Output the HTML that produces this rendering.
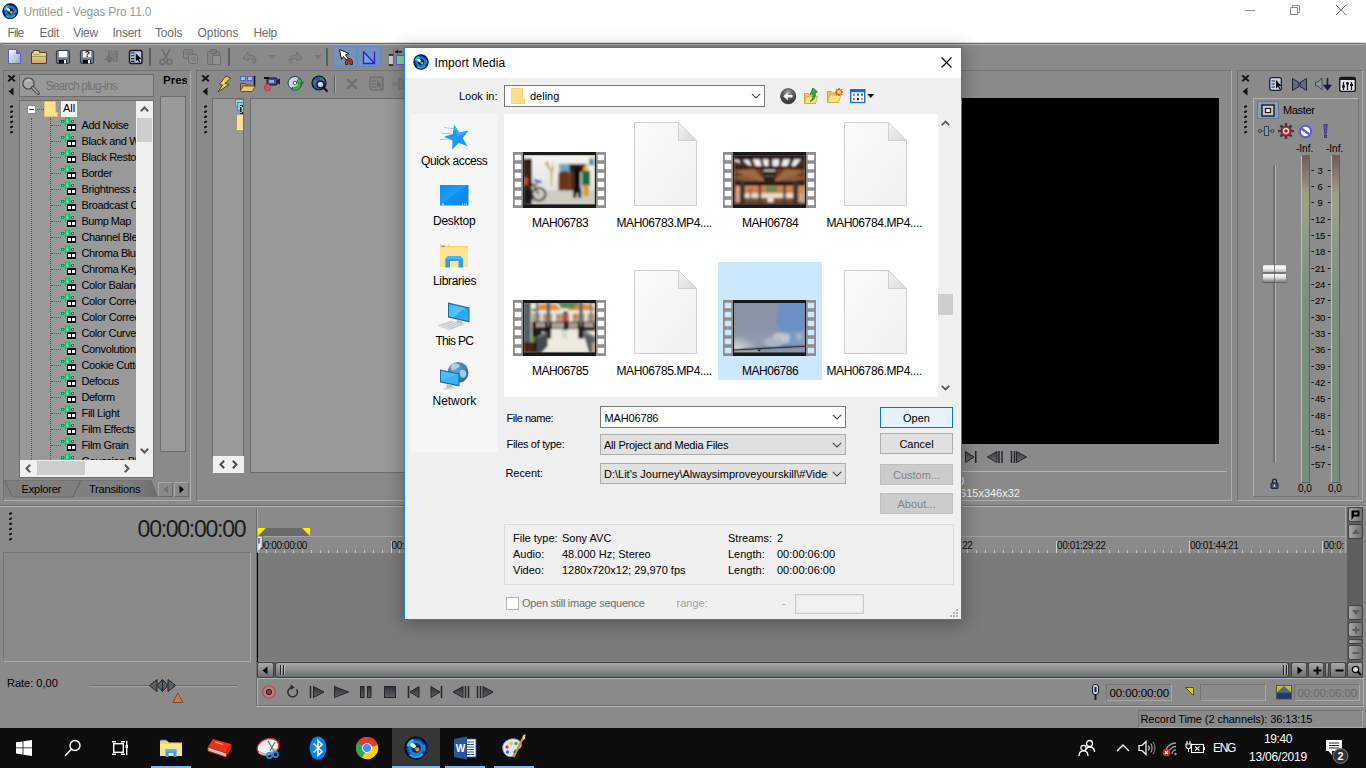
<!DOCTYPE html>
<html><head><meta charset="utf-8"><title>Untitled - Vegas Pro 11.0</title>
<style>
html,body{margin:0;padding:0;}
body{width:1366px;height:768px;overflow:hidden;position:relative;background:#8a8a8a;font-family:"Liberation Sans",sans-serif;font-size:11px;color:#000;}
div,span,svg{position:absolute;box-sizing:border-box;}
span{white-space:nowrap;line-height:1;}
.t{font-size:11px;}
.w{font-size:12px;}
.clip{overflow:hidden;}
</style></head>
<body>
<div style="left:0px;top:0px;width:1366px;height:42px;background:#fff;"></div>
<div style="left:0px;top:42px;width:1366px;height:1px;background:#dcdcdc;"></div>
<div style="left:3px;top:43px;width:1360px;height:1px;background:#6c6c6c;"></div>
<div style="left:3px;top:44px;width:1361px;height:1px;background:#b0b0b0;"></div>
<svg style="left:2px;top:2.7px;" width="16.5" height="16.5" viewBox="0 0 20 20"><defs><radialGradient id="vg2002" cx="0.5" cy="0.5" r="0.5"><stop offset="0" stop-color="#0a1428"/><stop offset="0.36" stop-color="#0c2a50"/><stop offset="0.5" stop-color="#1590e0"/><stop offset="0.72" stop-color="#0a58b8"/><stop offset="0.86" stop-color="#0a1060"/><stop offset="1" stop-color="#04040a"/></radialGradient></defs>
<circle cx="10" cy="10" r="9.6" fill="url(#vg2002)"/><path d="M3.2 8.500A7 7 0 0 1 8 3.300" stroke="#20d8e0" stroke-width="2.200" fill="none" opacity="0.900"/><path d="M5 15.500A7.200 7.200 0 0 0 15.500 14.800" stroke="#18b0ec" stroke-width="2" fill="none" opacity="0.900"/><path d="M16.600 7.500A7 7 0 0 1 16.800 12" stroke="#20a8f0" stroke-width="1.800" fill="none" opacity="0.800"/><ellipse cx="7.600" cy="8" rx="2.600" ry="1.700" fill="#fff" transform="rotate(35 7.600 8)"/><circle cx="11.200" cy="11.300" r="1.700" fill="#f09820"/><circle cx="9.800" cy="10.200" r="1" fill="#8a8a80" opacity="0.800"/></svg>
<span class="t" style="left:23.5px;top:5.5px;font-size:12px;letter-spacing:-0.19px;color:#999;">Untitled - Vegas Pro 11.0</span>
<svg style="left:1244px;top:5px;" width="12" height="12" viewBox="0 0 12 12"><path d="M1 5.5H11" stroke="#8c8c8c" stroke-width="1" fill="none"/></svg>
<svg style="left:1289px;top:4px;" width="12" height="12" viewBox="0 0 12 12"><path d="M1.5 3.5H8.5V10.5H1.5Z M3.5 3.5V1.5H10.5V8.5H8.5" stroke="#8c8c8c" stroke-width="1" fill="none"/></svg>
<svg style="left:1335px;top:4px;" width="12" height="12" viewBox="0 0 12 12"><path d="M1 1L11 11M11 1L1 11" stroke="#737373" stroke-width="1" fill="none"/></svg>
<span class="t" style="left:7.6px;top:27px;font-size:12px;letter-spacing:-0.95px;color:#6d6d6d;">File</span>
<span class="t" style="left:39.5px;top:27px;font-size:12px;letter-spacing:-0.29px;color:#6d6d6d;">Edit</span>
<span class="t" style="left:73.2px;top:27px;font-size:12px;letter-spacing:-0.30px;color:#6d6d6d;">View</span>
<span class="t" style="left:112.4px;top:27px;font-size:12px;letter-spacing:-0.24px;color:#6d6d6d;">Insert</span>
<span class="t" style="left:155px;top:27px;font-size:12px;letter-spacing:-0.15px;color:#6d6d6d;">Tools</span>
<span class="t" style="left:197.6px;top:27px;font-size:12px;letter-spacing:-0.09px;color:#6d6d6d;">Options</span>
<span class="t" style="left:253.4px;top:27px;font-size:12px;letter-spacing:-0.26px;color:#6d6d6d;">Help</span>
<svg style="left:8px;top:49px;" width="13" height="15" viewBox="0 0 13 15"><defs><linearGradient id="nd" x1="0" y1="0" x2="1" y2="1"><stop offset="0" stop-color="#fff"/><stop offset="1" stop-color="#8fa3c6"/></linearGradient></defs><path d="M0.5 0.5H8.500L12.500 4.500V14.500H0.500Z" fill="url(#nd)" stroke="#5a5af0" stroke-width="1"/><path d="M8 0.500L12.500 5H8Z" fill="#5a62e0"/></svg>
<svg style="left:31px;top:50px;" width="16" height="14" viewBox="0 0 16 14"><defs><linearGradient id="fo" x1="0" y1="0" x2="0" y2="1"><stop offset="0" stop-color="#e4e2a0"/><stop offset="0.450" stop-color="#d8cc88"/><stop offset="1" stop-color="#d0a468"/></linearGradient></defs><path d="M0.500 13.500V2.500H2L2.500 0.500H8L8.500 2.500H15.500V13.500Z" fill="url(#fo)" stroke="#5a3a1a"/><path d="M1 6.500H15" stroke="#a08850" stroke-width="0.800"/><path d="M2.500 4.500H8.500" stroke="#a09058" stroke-width="0.800"/></svg>
<svg style="left:55px;top:49px;" width="16" height="16" viewBox="0 0 16 16"><rect x="1.500" y="1.500" width="13" height="13" rx="1.800" fill="#6e7e94" stroke="#38404e" stroke-width="1.200"/><rect x="3.800" y="2" width="8.400" height="6.300" fill="#fafbfd"/><rect x="3.800" y="10.800" width="8" height="3.600" fill="#0c0e14"/><rect x="9" y="11" width="2" height="3.400" fill="#f0f0f0"/></svg>
<svg style="left:79px;top:49px;" width="16" height="16" viewBox="0 0 16 16"><rect x="1.500" y="1.500" width="13" height="13" rx="1.800" fill="#6e7e94" stroke="#38404e" stroke-width="1.200"/><rect x="3.800" y="2" width="8.400" height="6.300" fill="#fafbfd"/><rect x="3.800" y="10.800" width="8" height="3.600" fill="#0c0e14"/><rect x="9" y="11" width="2" height="3.400" fill="#f0f0f0"/><text x="8.300" y="8" font-size="8.500" font-weight="bold" text-anchor="middle" font-family="Liberation Sans,sans-serif" fill="#000">?</text></svg>
<svg style="left:103px;top:49px;" width="16" height="16" viewBox="0 0 16 16"><rect x="5" y="1.500" width="10" height="11.500" fill="#7e7e7e"/><rect x="5" y="1.500" width="2" height="11.500" fill="#727272"/><rect x="13" y="1.500" width="2" height="11.500" fill="#727272"/><path d="M5.500 3.500h1M5.500 6h1M5.500 8.500h1M13.500 3.500h1M13.500 6h1M13.500 8.500h1M13.500 11h1" stroke="#8e8e8e"/><path d="M1 10.500h2l1-3 1 6 1.200-9 1.200 9 1-5 1 2h2" stroke="#707070" fill="none" stroke-width="1.100"/></svg>
<svg style="left:128px;top:49px;" width="15" height="16" viewBox="0 0 15 16"><rect x="1.500" y="1.500" width="12.500" height="13" rx="1.800" fill="#b4c8e6" stroke="#10141c" stroke-width="1.400"/><path d="M3 4h3.500M3 6.800h3.500M3 9.600h3.500M3 12.400h3.500" stroke="#10141c" stroke-width="1.100"/><path d="M7.800 4.500V12.500l1.900-1.700 1.300 2.900 1.400-.7-1.400-2.700 2.500-.2z" fill="#000"/></svg>
<div style="left:149px;top:48px;width:2px;height:18px;background:#5e5e5e;"></div>
<svg style="left:158px;top:48px;" width="16" height="18" viewBox="0 0 16 18"><path d="M4 1L9 11M12 1L7 11" stroke="#6c6c6c" stroke-width="1.6" fill="none"/><circle cx="4.5" cy="14" r="2.5" fill="none" stroke="#6c6c6c" stroke-width="1.4"/><circle cx="11.5" cy="14" r="2.5" fill="none" stroke="#6c6c6c" stroke-width="1.4"/></svg>
<svg style="left:182px;top:48px;" width="17" height="18" viewBox="0 0 17 18"><rect x="1.5" y="1.5" width="9" height="9" rx="2" fill="#868686" stroke="#6e6e6e"/><rect x="6.5" y="6.5" width="9" height="9" rx="2" fill="#8e8e8e" stroke="#6e6e6e"/><path d="M3 4h6M3 6h6M9 10h5M9 12h5" stroke="#747474"/></svg>
<svg style="left:206px;top:48px;" width="17" height="18" viewBox="0 0 17 18"><rect x="1.5" y="3.5" width="12" height="13" rx="1.5" fill="#848484" stroke="#6e6e6e"/><rect x="4.5" y="1.5" width="6" height="4" rx="1" fill="#7a7a7a" stroke="#6a6a6a"/><rect x="6.5" y="7.5" width="8" height="9" fill="#909090" stroke="#707070"/></svg>
<div style="left:228px;top:48px;width:2px;height:18px;background:#5e5e5e;"></div>
<svg style="left:241px;top:50px;" width="18" height="14" viewBox="0 0 18 14"><path d="M2 8L7 2V5C12 5 15 7 15 11C13 9 10 8.5 7 9V11Z" fill="#848484" stroke="#707070"/><circle cx="13" cy="11.5" r="1.6" fill="none" stroke="#707070"/></svg>
<svg style="left:268px;top:55px;" width="8" height="5" viewBox="0 0 8 5"><path d="M0 0H8L4 4.5Z" fill="#787878"/></svg>
<svg style="left:286px;top:50px;" width="18" height="14" viewBox="0 0 18 14"><path d="M16 8L11 2V5C6 5 3 7 3 11C5 9 8 8.5 11 9V11Z" fill="#848484" stroke="#707070"/><circle cx="5" cy="11.5" r="1.6" fill="none" stroke="#707070"/></svg>
<svg style="left:314px;top:55px;" width="8" height="5" viewBox="0 0 8 5"><path d="M0 0H8L4 4.5Z" fill="#787878"/></svg>
<div style="left:326px;top:48px;width:2px;height:18px;background:#5e5e5e;"></div>
<div style="left:333px;top:46px;width:24px;height:21px;background:#7592b6;border:1px solid #5f8cc8;"></div>
<div style="left:357px;top:46px;width:24px;height:21px;background:#7592b6;border:1px solid #5f8cc8;"></div>
<svg style="left:337px;top:48px;" width="17" height="18" viewBox="0 0 17 18"><path d="M2.500 1.500L12 5.500L8.500 7L11.500 11L9.500 12.500L6.500 8.500L4.500 11.500Z" fill="#fff" stroke="#111" stroke-width="1"/><path d="M8.500 16.500V14a3.500 3.500 0 0 1 7 0V16.500H13V14a1 1 0 0 0 -2 0V16.500Z" fill="#d83020" stroke="#3a0a0a" stroke-width="0.800"/></svg>
<svg style="left:361px;top:49px;" width="16" height="16" viewBox="0 0 16 16"><path d="M2.500 2.500L13.500 14.500H2.500Z" fill="#8a9cf0" opacity="0.800"/><path d="M2.500 2.500V14.500H13.500V2.500M2.500 2.500L13.500 14.500" fill="none" stroke="#1428d8" stroke-width="1.300"/></svg>
<svg style="left:388px;top:48px;" width="18" height="18" viewBox="0 0 18 18"><rect x="1" y="7" width="4" height="10" fill="#c4ccd8"/><path d="M0.800 7H5.200M0.800 17H5.200" stroke="#111" stroke-width="1.300"/><path d="M5.500 1V17" stroke="#5a5af0" stroke-width="1"/><path d="M6.500 3.700L10 1.500V3H14V4.400H10V5.900Z" fill="#141430"/><rect x="8.500" y="7.500" width="9" height="9" fill="#86d890" stroke="#5a5af0" stroke-width="1"/></svg>
<div style="left:3px;top:70px;width:188px;height:431px;border:1px solid #737373;border-right-color:#adadad;border-bottom-color:#adadad;background:#8a8a8a;"></div>
<svg style="left:7px;top:75px;" width="9" height="8" viewBox="0 0 9 8"><path d="M1.200 0.300L7.800 6.200M7.800 0.300L1.200 6.200" stroke="#141418" stroke-width="1.900" fill="none"/></svg>
<svg style="left:8px;top:87px;" width="6" height="9" viewBox="0 0 6 9"><path d="M5.5 0.5V8.5L0.5 4.5Z" fill="#111"/></svg>
<svg style="left:8.5px;top:105px;" width="6" height="31.72" viewBox="0 0 6 31.72"><ellipse cx="3.200" cy="2.30" rx="1.500" ry="1" fill="#a8b4c4" opacity="0.550" transform="rotate(-25 3.200 2.30)"/><ellipse cx="2.600" cy="1.60" rx="1.700" ry="1.150" fill="#14161a" transform="rotate(-25 2.600 1.60)"/><ellipse cx="3.200" cy="7.42" rx="1.500" ry="1" fill="#a8b4c4" opacity="0.550" transform="rotate(-25 3.200 7.42)"/><ellipse cx="2.600" cy="6.72" rx="1.700" ry="1.150" fill="#14161a" transform="rotate(-25 2.600 6.72)"/><ellipse cx="3.200" cy="12.54" rx="1.500" ry="1" fill="#a8b4c4" opacity="0.550" transform="rotate(-25 3.200 12.54)"/><ellipse cx="2.600" cy="11.84" rx="1.700" ry="1.150" fill="#14161a" transform="rotate(-25 2.600 11.84)"/><ellipse cx="3.200" cy="17.66" rx="1.500" ry="1" fill="#a8b4c4" opacity="0.550" transform="rotate(-25 3.200 17.66)"/><ellipse cx="2.600" cy="16.96" rx="1.700" ry="1.150" fill="#14161a" transform="rotate(-25 2.600 16.96)"/><ellipse cx="3.200" cy="22.78" rx="1.500" ry="1" fill="#a8b4c4" opacity="0.550" transform="rotate(-25 3.200 22.78)"/><ellipse cx="2.600" cy="22.08" rx="1.700" ry="1.150" fill="#14161a" transform="rotate(-25 2.600 22.08)"/><ellipse cx="3.200" cy="27.90" rx="1.500" ry="1" fill="#a8b4c4" opacity="0.550" transform="rotate(-25 3.200 27.90)"/><ellipse cx="2.600" cy="27.20" rx="1.700" ry="1.150" fill="#14161a" transform="rotate(-25 2.600 27.20)"/></svg>
<div style="left:19px;top:74px;width:135px;height:23px;background:#999;border:1px solid #6e6e6e;"></div>
<svg style="left:20.5px;top:76px;" width="20" height="20" viewBox="0 0 20 20"><circle cx="7.5" cy="7.5" r="5.6" fill="#a8a8a8" stroke="#4a4a4a" stroke-width="1.3"/><path d="M4.5 6.5a3.4 3.4 0 0 1 5-2" stroke="#d8d8d8" fill="none"/><path d="M11.5 11.5L17.2 17.2" stroke="#4a4a4a" stroke-width="3.4" stroke-linecap="round"/><path d="M11.8 11.8L17 17" stroke="#b4b4b4" stroke-width="1.4" stroke-linecap="round"/></svg>
<span class="t" style="left:45.5px;top:80px;font-size:12px;letter-spacing:-0.79px;color:#727272;">Search plug-ins</span>
<div style="left:160px;top:74px;width:27px;height:14px;overflow:hidden;"><span class="t" style="left:3px;top:1px;font-weight:bold;font-size:11.5px;">Preset:</span></div>
<div style="left:160px;top:96px;width:26px;height:356px;background:#999;border:1px solid #6c6c6c;"></div>
<div style="left:19px;top:100px;width:135px;height:378px;background:#999;border:1px solid #6e6e6e;overflow:hidden;"><div style="left:0px;top:0px;width:116px;height:359px;overflow:hidden;"><div style="left:11px;top:17px;width:1px;height:380px;border-left:1px dotted #555;"></div>
<div style="left:30px;top:17px;width:1px;height:380px;border-left:1px dotted #555;"></div>
<div style="left:17px;top:8px;width:7px;height:1px;border-top:1px dotted #555;"></div>
<div style="left:7px;top:4px;width:9px;height:9px;background:#fff;border:1px solid #8a8a8a;"><div style="left:1px;top:3px;width:5px;height:1px;background:#2040c0;"></div></div>
<svg style="left:24px;top:0px;" width="14" height="16" viewBox="0 0 14 16"><path d="M0.5 0.5H11.5V11.5H13.5V15.5H0.5Z" fill="#ffe28a" stroke="#e8c860" stroke-width="0.6"/></svg>
<div style="left:41px;top:0px;width:16px;height:16px;background:#f2f2f2;"></div>
<span class="t" style="left:43px;top:2px;font-size:11px;">All</span>
<div style="left:31px;top:24px;width:10px;height:1px;border-top:1px dotted #555;"></div>
<svg style="left:41px;top:17px;" width="15" height="13" viewBox="0 0 15 13"><rect x="0" y="2" width="3" height="3" fill="#009a58"/><rect x="1" y="3" width="1" height="1" fill="#60ffb0"/><rect x="10" y="2" width="3" height="3" fill="#009a58"/><rect x="11" y="3" width="1" height="1" fill="#60ffb0"/><rect x="3" y="3" width="7" height="1" fill="#00a060"/><rect x="4" y="0" width="5" height="7" fill="#00c070"/><rect x="5" y="1" width="2.500" height="4.500" fill="#30f098"/><rect x="6" y="6" width="9" height="7" fill="#000"/><rect x="7" y="8" width="3" height="3" fill="#fff"/><rect x="11" y="8" width="3" height="3" fill="#fff"/></svg>
<span class="t" style="left:61.5px;top:19px;font-size:11px;letter-spacing:-0.41px;">Add Noise</span>
<div style="left:31px;top:40px;width:10px;height:1px;border-top:1px dotted #555;"></div>
<svg style="left:41px;top:33px;" width="15" height="13" viewBox="0 0 15 13"><rect x="0" y="2" width="3" height="3" fill="#009a58"/><rect x="1" y="3" width="1" height="1" fill="#60ffb0"/><rect x="10" y="2" width="3" height="3" fill="#009a58"/><rect x="11" y="3" width="1" height="1" fill="#60ffb0"/><rect x="3" y="3" width="7" height="1" fill="#00a060"/><rect x="4" y="0" width="5" height="7" fill="#00c070"/><rect x="5" y="1" width="2.500" height="4.500" fill="#30f098"/><rect x="6" y="6" width="9" height="7" fill="#000"/><rect x="7" y="8" width="3" height="3" fill="#fff"/><rect x="11" y="8" width="3" height="3" fill="#fff"/></svg>
<span class="t" style="left:61.5px;top:35px;font-size:11px;letter-spacing:-0.37px;">Black and White</span>
<div style="left:31px;top:56px;width:10px;height:1px;border-top:1px dotted #555;"></div>
<svg style="left:41px;top:49px;" width="15" height="13" viewBox="0 0 15 13"><rect x="0" y="2" width="3" height="3" fill="#009a58"/><rect x="1" y="3" width="1" height="1" fill="#60ffb0"/><rect x="10" y="2" width="3" height="3" fill="#009a58"/><rect x="11" y="3" width="1" height="1" fill="#60ffb0"/><rect x="3" y="3" width="7" height="1" fill="#00a060"/><rect x="4" y="0" width="5" height="7" fill="#00c070"/><rect x="5" y="1" width="2.500" height="4.500" fill="#30f098"/><rect x="6" y="6" width="9" height="7" fill="#000"/><rect x="7" y="8" width="3" height="3" fill="#fff"/><rect x="11" y="8" width="3" height="3" fill="#fff"/></svg>
<span class="t" style="left:61.5px;top:51px;font-size:11px;letter-spacing:-0.37px;">Black Restore</span>
<div style="left:31px;top:72px;width:10px;height:1px;border-top:1px dotted #555;"></div>
<svg style="left:41px;top:65px;" width="15" height="13" viewBox="0 0 15 13"><rect x="0" y="2" width="3" height="3" fill="#009a58"/><rect x="1" y="3" width="1" height="1" fill="#60ffb0"/><rect x="10" y="2" width="3" height="3" fill="#009a58"/><rect x="11" y="3" width="1" height="1" fill="#60ffb0"/><rect x="3" y="3" width="7" height="1" fill="#00a060"/><rect x="4" y="0" width="5" height="7" fill="#00c070"/><rect x="5" y="1" width="2.500" height="4.500" fill="#30f098"/><rect x="6" y="6" width="9" height="7" fill="#000"/><rect x="7" y="8" width="3" height="3" fill="#fff"/><rect x="11" y="8" width="3" height="3" fill="#fff"/></svg>
<span class="t" style="left:61.5px;top:67px;font-size:11px;letter-spacing:-0.43px;">Border</span>
<div style="left:31px;top:88px;width:10px;height:1px;border-top:1px dotted #555;"></div>
<svg style="left:41px;top:81px;" width="15" height="13" viewBox="0 0 15 13"><rect x="0" y="2" width="3" height="3" fill="#009a58"/><rect x="1" y="3" width="1" height="1" fill="#60ffb0"/><rect x="10" y="2" width="3" height="3" fill="#009a58"/><rect x="11" y="3" width="1" height="1" fill="#60ffb0"/><rect x="3" y="3" width="7" height="1" fill="#00a060"/><rect x="4" y="0" width="5" height="7" fill="#00c070"/><rect x="5" y="1" width="2.500" height="4.500" fill="#30f098"/><rect x="6" y="6" width="9" height="7" fill="#000"/><rect x="7" y="8" width="3" height="3" fill="#fff"/><rect x="11" y="8" width="3" height="3" fill="#fff"/></svg>
<span class="t" style="left:61.5px;top:83px;font-size:11px;letter-spacing:-0.35px;">Brightness and Contrast</span>
<div style="left:31px;top:104px;width:10px;height:1px;border-top:1px dotted #555;"></div>
<svg style="left:41px;top:97px;" width="15" height="13" viewBox="0 0 15 13"><rect x="0" y="2" width="3" height="3" fill="#009a58"/><rect x="1" y="3" width="1" height="1" fill="#60ffb0"/><rect x="10" y="2" width="3" height="3" fill="#009a58"/><rect x="11" y="3" width="1" height="1" fill="#60ffb0"/><rect x="3" y="3" width="7" height="1" fill="#00a060"/><rect x="4" y="0" width="5" height="7" fill="#00c070"/><rect x="5" y="1" width="2.500" height="4.500" fill="#30f098"/><rect x="6" y="6" width="9" height="7" fill="#000"/><rect x="7" y="8" width="3" height="3" fill="#fff"/><rect x="11" y="8" width="3" height="3" fill="#fff"/></svg>
<span class="t" style="left:61.5px;top:99px;font-size:11px;letter-spacing:-0.37px;">Broadcast Colors</span>
<div style="left:31px;top:120px;width:10px;height:1px;border-top:1px dotted #555;"></div>
<svg style="left:41px;top:113px;" width="15" height="13" viewBox="0 0 15 13"><rect x="0" y="2" width="3" height="3" fill="#009a58"/><rect x="1" y="3" width="1" height="1" fill="#60ffb0"/><rect x="10" y="2" width="3" height="3" fill="#009a58"/><rect x="11" y="3" width="1" height="1" fill="#60ffb0"/><rect x="3" y="3" width="7" height="1" fill="#00a060"/><rect x="4" y="0" width="5" height="7" fill="#00c070"/><rect x="5" y="1" width="2.500" height="4.500" fill="#30f098"/><rect x="6" y="6" width="9" height="7" fill="#000"/><rect x="7" y="8" width="3" height="3" fill="#fff"/><rect x="11" y="8" width="3" height="3" fill="#fff"/></svg>
<span class="t" style="left:61.5px;top:115px;font-size:11px;letter-spacing:-0.49px;">Bump Map</span>
<div style="left:31px;top:136px;width:10px;height:1px;border-top:1px dotted #555;"></div>
<svg style="left:41px;top:129px;" width="15" height="13" viewBox="0 0 15 13"><rect x="0" y="2" width="3" height="3" fill="#009a58"/><rect x="1" y="3" width="1" height="1" fill="#60ffb0"/><rect x="10" y="2" width="3" height="3" fill="#009a58"/><rect x="11" y="3" width="1" height="1" fill="#60ffb0"/><rect x="3" y="3" width="7" height="1" fill="#00a060"/><rect x="4" y="0" width="5" height="7" fill="#00c070"/><rect x="5" y="1" width="2.500" height="4.500" fill="#30f098"/><rect x="6" y="6" width="9" height="7" fill="#000"/><rect x="7" y="8" width="3" height="3" fill="#fff"/><rect x="11" y="8" width="3" height="3" fill="#fff"/></svg>
<span class="t" style="left:61.5px;top:131px;font-size:11px;letter-spacing:-0.39px;">Channel Blend</span>
<div style="left:31px;top:152px;width:10px;height:1px;border-top:1px dotted #555;"></div>
<svg style="left:41px;top:145px;" width="15" height="13" viewBox="0 0 15 13"><rect x="0" y="2" width="3" height="3" fill="#009a58"/><rect x="1" y="3" width="1" height="1" fill="#60ffb0"/><rect x="10" y="2" width="3" height="3" fill="#009a58"/><rect x="11" y="3" width="1" height="1" fill="#60ffb0"/><rect x="3" y="3" width="7" height="1" fill="#00a060"/><rect x="4" y="0" width="5" height="7" fill="#00c070"/><rect x="5" y="1" width="2.500" height="4.500" fill="#30f098"/><rect x="6" y="6" width="9" height="7" fill="#000"/><rect x="7" y="8" width="3" height="3" fill="#fff"/><rect x="11" y="8" width="3" height="3" fill="#fff"/></svg>
<span class="t" style="left:61.5px;top:147px;font-size:11px;letter-spacing:-0.40px;">Chroma Blur</span>
<div style="left:31px;top:168px;width:10px;height:1px;border-top:1px dotted #555;"></div>
<svg style="left:41px;top:161px;" width="15" height="13" viewBox="0 0 15 13"><rect x="0" y="2" width="3" height="3" fill="#009a58"/><rect x="1" y="3" width="1" height="1" fill="#60ffb0"/><rect x="10" y="2" width="3" height="3" fill="#009a58"/><rect x="11" y="3" width="1" height="1" fill="#60ffb0"/><rect x="3" y="3" width="7" height="1" fill="#00a060"/><rect x="4" y="0" width="5" height="7" fill="#00c070"/><rect x="5" y="1" width="2.500" height="4.500" fill="#30f098"/><rect x="6" y="6" width="9" height="7" fill="#000"/><rect x="7" y="8" width="3" height="3" fill="#fff"/><rect x="11" y="8" width="3" height="3" fill="#fff"/></svg>
<span class="t" style="left:61.5px;top:163px;font-size:11px;letter-spacing:-0.42px;">Chroma Keyer</span>
<div style="left:31px;top:184px;width:10px;height:1px;border-top:1px dotted #555;"></div>
<svg style="left:41px;top:177px;" width="15" height="13" viewBox="0 0 15 13"><rect x="0" y="2" width="3" height="3" fill="#009a58"/><rect x="1" y="3" width="1" height="1" fill="#60ffb0"/><rect x="10" y="2" width="3" height="3" fill="#009a58"/><rect x="11" y="3" width="1" height="1" fill="#60ffb0"/><rect x="3" y="3" width="7" height="1" fill="#00a060"/><rect x="4" y="0" width="5" height="7" fill="#00c070"/><rect x="5" y="1" width="2.500" height="4.500" fill="#30f098"/><rect x="6" y="6" width="9" height="7" fill="#000"/><rect x="7" y="8" width="3" height="3" fill="#fff"/><rect x="11" y="8" width="3" height="3" fill="#fff"/></svg>
<span class="t" style="left:61.5px;top:179px;font-size:11px;letter-spacing:-0.37px;">Color Balance</span>
<div style="left:31px;top:200px;width:10px;height:1px;border-top:1px dotted #555;"></div>
<svg style="left:41px;top:193px;" width="15" height="13" viewBox="0 0 15 13"><rect x="0" y="2" width="3" height="3" fill="#009a58"/><rect x="1" y="3" width="1" height="1" fill="#60ffb0"/><rect x="10" y="2" width="3" height="3" fill="#009a58"/><rect x="11" y="3" width="1" height="1" fill="#60ffb0"/><rect x="3" y="3" width="7" height="1" fill="#00a060"/><rect x="4" y="0" width="5" height="7" fill="#00c070"/><rect x="5" y="1" width="2.500" height="4.500" fill="#30f098"/><rect x="6" y="6" width="9" height="7" fill="#000"/><rect x="7" y="8" width="3" height="3" fill="#fff"/><rect x="11" y="8" width="3" height="3" fill="#fff"/></svg>
<span class="t" style="left:61.5px;top:195px;font-size:11px;letter-spacing:-0.35px;">Color Corrector</span>
<div style="left:31px;top:216px;width:10px;height:1px;border-top:1px dotted #555;"></div>
<svg style="left:41px;top:209px;" width="15" height="13" viewBox="0 0 15 13"><rect x="0" y="2" width="3" height="3" fill="#009a58"/><rect x="1" y="3" width="1" height="1" fill="#60ffb0"/><rect x="10" y="2" width="3" height="3" fill="#009a58"/><rect x="11" y="3" width="1" height="1" fill="#60ffb0"/><rect x="3" y="3" width="7" height="1" fill="#00a060"/><rect x="4" y="0" width="5" height="7" fill="#00c070"/><rect x="5" y="1" width="2.500" height="4.500" fill="#30f098"/><rect x="6" y="6" width="9" height="7" fill="#000"/><rect x="7" y="8" width="3" height="3" fill="#fff"/><rect x="11" y="8" width="3" height="3" fill="#fff"/></svg>
<span class="t" style="left:61.5px;top:211px;font-size:11px;letter-spacing:-0.35px;">Color Corrector (Secondary)</span>
<div style="left:31px;top:232px;width:10px;height:1px;border-top:1px dotted #555;"></div>
<svg style="left:41px;top:225px;" width="15" height="13" viewBox="0 0 15 13"><rect x="0" y="2" width="3" height="3" fill="#009a58"/><rect x="1" y="3" width="1" height="1" fill="#60ffb0"/><rect x="10" y="2" width="3" height="3" fill="#009a58"/><rect x="11" y="3" width="1" height="1" fill="#60ffb0"/><rect x="3" y="3" width="7" height="1" fill="#00a060"/><rect x="4" y="0" width="5" height="7" fill="#00c070"/><rect x="5" y="1" width="2.500" height="4.500" fill="#30f098"/><rect x="6" y="6" width="9" height="7" fill="#000"/><rect x="7" y="8" width="3" height="3" fill="#fff"/><rect x="11" y="8" width="3" height="3" fill="#fff"/></svg>
<span class="t" style="left:61.5px;top:227px;font-size:11px;letter-spacing:-0.38px;">Color Curves</span>
<div style="left:31px;top:248px;width:10px;height:1px;border-top:1px dotted #555;"></div>
<svg style="left:41px;top:241px;" width="15" height="13" viewBox="0 0 15 13"><rect x="0" y="2" width="3" height="3" fill="#009a58"/><rect x="1" y="3" width="1" height="1" fill="#60ffb0"/><rect x="10" y="2" width="3" height="3" fill="#009a58"/><rect x="11" y="3" width="1" height="1" fill="#60ffb0"/><rect x="3" y="3" width="7" height="1" fill="#00a060"/><rect x="4" y="0" width="5" height="7" fill="#00c070"/><rect x="5" y="1" width="2.500" height="4.500" fill="#30f098"/><rect x="6" y="6" width="9" height="7" fill="#000"/><rect x="7" y="8" width="3" height="3" fill="#fff"/><rect x="11" y="8" width="3" height="3" fill="#fff"/></svg>
<span class="t" style="left:61.5px;top:243px;font-size:11px;letter-spacing:-0.36px;">Convolution Kernel</span>
<div style="left:31px;top:264px;width:10px;height:1px;border-top:1px dotted #555;"></div>
<svg style="left:41px;top:257px;" width="15" height="13" viewBox="0 0 15 13"><rect x="0" y="2" width="3" height="3" fill="#009a58"/><rect x="1" y="3" width="1" height="1" fill="#60ffb0"/><rect x="10" y="2" width="3" height="3" fill="#009a58"/><rect x="11" y="3" width="1" height="1" fill="#60ffb0"/><rect x="3" y="3" width="7" height="1" fill="#00a060"/><rect x="4" y="0" width="5" height="7" fill="#00c070"/><rect x="5" y="1" width="2.500" height="4.500" fill="#30f098"/><rect x="6" y="6" width="9" height="7" fill="#000"/><rect x="7" y="8" width="3" height="3" fill="#fff"/><rect x="11" y="8" width="3" height="3" fill="#fff"/></svg>
<span class="t" style="left:61.5px;top:259px;font-size:11px;letter-spacing:-0.36px;">Cookie Cutter</span>
<div style="left:31px;top:280px;width:10px;height:1px;border-top:1px dotted #555;"></div>
<svg style="left:41px;top:273px;" width="15" height="13" viewBox="0 0 15 13"><rect x="0" y="2" width="3" height="3" fill="#009a58"/><rect x="1" y="3" width="1" height="1" fill="#60ffb0"/><rect x="10" y="2" width="3" height="3" fill="#009a58"/><rect x="11" y="3" width="1" height="1" fill="#60ffb0"/><rect x="3" y="3" width="7" height="1" fill="#00a060"/><rect x="4" y="0" width="5" height="7" fill="#00c070"/><rect x="5" y="1" width="2.500" height="4.500" fill="#30f098"/><rect x="6" y="6" width="9" height="7" fill="#000"/><rect x="7" y="8" width="3" height="3" fill="#fff"/><rect x="11" y="8" width="3" height="3" fill="#fff"/></svg>
<span class="t" style="left:61.5px;top:275px;font-size:11px;letter-spacing:-0.44px;">Defocus</span>
<div style="left:31px;top:296px;width:10px;height:1px;border-top:1px dotted #555;"></div>
<svg style="left:41px;top:289px;" width="15" height="13" viewBox="0 0 15 13"><rect x="0" y="2" width="3" height="3" fill="#009a58"/><rect x="1" y="3" width="1" height="1" fill="#60ffb0"/><rect x="10" y="2" width="3" height="3" fill="#009a58"/><rect x="11" y="3" width="1" height="1" fill="#60ffb0"/><rect x="3" y="3" width="7" height="1" fill="#00a060"/><rect x="4" y="0" width="5" height="7" fill="#00c070"/><rect x="5" y="1" width="2.500" height="4.500" fill="#30f098"/><rect x="6" y="6" width="9" height="7" fill="#000"/><rect x="7" y="8" width="3" height="3" fill="#fff"/><rect x="11" y="8" width="3" height="3" fill="#fff"/></svg>
<span class="t" style="left:61.5px;top:291px;font-size:11px;letter-spacing:-0.47px;">Deform</span>
<div style="left:31px;top:312px;width:10px;height:1px;border-top:1px dotted #555;"></div>
<svg style="left:41px;top:305px;" width="15" height="13" viewBox="0 0 15 13"><rect x="0" y="2" width="3" height="3" fill="#009a58"/><rect x="1" y="3" width="1" height="1" fill="#60ffb0"/><rect x="10" y="2" width="3" height="3" fill="#009a58"/><rect x="11" y="3" width="1" height="1" fill="#60ffb0"/><rect x="3" y="3" width="7" height="1" fill="#00a060"/><rect x="4" y="0" width="5" height="7" fill="#00c070"/><rect x="5" y="1" width="2.500" height="4.500" fill="#30f098"/><rect x="6" y="6" width="9" height="7" fill="#000"/><rect x="7" y="8" width="3" height="3" fill="#fff"/><rect x="11" y="8" width="3" height="3" fill="#fff"/></svg>
<span class="t" style="left:61.5px;top:307px;font-size:11px;letter-spacing:-0.30px;">Fill Light</span>
<div style="left:31px;top:328px;width:10px;height:1px;border-top:1px dotted #555;"></div>
<svg style="left:41px;top:321px;" width="15" height="13" viewBox="0 0 15 13"><rect x="0" y="2" width="3" height="3" fill="#009a58"/><rect x="1" y="3" width="1" height="1" fill="#60ffb0"/><rect x="10" y="2" width="3" height="3" fill="#009a58"/><rect x="11" y="3" width="1" height="1" fill="#60ffb0"/><rect x="3" y="3" width="7" height="1" fill="#00a060"/><rect x="4" y="0" width="5" height="7" fill="#00c070"/><rect x="5" y="1" width="2.500" height="4.500" fill="#30f098"/><rect x="6" y="6" width="9" height="7" fill="#000"/><rect x="7" y="8" width="3" height="3" fill="#fff"/><rect x="11" y="8" width="3" height="3" fill="#fff"/></svg>
<span class="t" style="left:61.5px;top:323px;font-size:11px;letter-spacing:-0.34px;">Film Effects</span>
<div style="left:31px;top:344px;width:10px;height:1px;border-top:1px dotted #555;"></div>
<svg style="left:41px;top:337px;" width="15" height="13" viewBox="0 0 15 13"><rect x="0" y="2" width="3" height="3" fill="#009a58"/><rect x="1" y="3" width="1" height="1" fill="#60ffb0"/><rect x="10" y="2" width="3" height="3" fill="#009a58"/><rect x="11" y="3" width="1" height="1" fill="#60ffb0"/><rect x="3" y="3" width="7" height="1" fill="#00a060"/><rect x="4" y="0" width="5" height="7" fill="#00c070"/><rect x="5" y="1" width="2.500" height="4.500" fill="#30f098"/><rect x="6" y="6" width="9" height="7" fill="#000"/><rect x="7" y="8" width="3" height="3" fill="#fff"/><rect x="11" y="8" width="3" height="3" fill="#fff"/></svg>
<span class="t" style="left:61.5px;top:339px;font-size:11px;letter-spacing:-0.37px;">Film Grain</span>
<div style="left:31px;top:360px;width:10px;height:1px;border-top:1px dotted #555;"></div>
<svg style="left:41px;top:353px;" width="15" height="13" viewBox="0 0 15 13"><rect x="0" y="2" width="3" height="3" fill="#009a58"/><rect x="1" y="3" width="1" height="1" fill="#60ffb0"/><rect x="10" y="2" width="3" height="3" fill="#009a58"/><rect x="11" y="3" width="1" height="1" fill="#60ffb0"/><rect x="3" y="3" width="7" height="1" fill="#00a060"/><rect x="4" y="0" width="5" height="7" fill="#00c070"/><rect x="5" y="1" width="2.500" height="4.500" fill="#30f098"/><rect x="6" y="6" width="9" height="7" fill="#000"/><rect x="7" y="8" width="3" height="3" fill="#fff"/><rect x="11" y="8" width="3" height="3" fill="#fff"/></svg>
<span class="t" style="left:61.5px;top:355px;font-size:11px;letter-spacing:-0.37px;">Gaussian Blur</span>
</div>
</div>
<div style="left:136px;top:101px;width:17px;height:376px;background:#f0f0f0;"></div>
<svg style="left:140px;top:106px;" width="9" height="6" viewBox="0 0 9 6"><path d="M0.8 5.2L4.5 1.5L8.2 5.2" stroke="#5a5a5a" stroke-width="2" fill="none"/></svg>
<svg style="left:140px;top:448px;" width="9" height="6" viewBox="0 0 9 6"><path d="M0.8 0.8L4.5 4.5L8.2 0.8" stroke="#5a5a5a" stroke-width="2" fill="none"/></svg>
<div style="left:137px;top:118px;width:15px;height:24px;background:#cdcdcd;"></div>
<div style="left:20px;top:460px;width:133px;height:17px;background:#f0f0f0;"></div>
<svg style="left:25px;top:464px;" width="6" height="9" viewBox="0 0 6 9"><path d="M5.2 0.8L1.5 4.5L5.2 8.2" stroke="#5a5a5a" stroke-width="2" fill="none"/></svg>
<svg style="left:124px;top:464px;" width="6" height="9" viewBox="0 0 6 9"><path d="M0.8 0.8L4.5 4.5L0.8 8.2" stroke="#5a5a5a" stroke-width="2" fill="none"/></svg>
<div style="left:37px;top:461px;width:48px;height:14px;background:#cdcdcd;"></div>
<svg style="left:4px;top:480px;" width="187" height="20" viewBox="0 0 187 20"><defs><linearGradient id="tbg" x1="0" y1="0" x2="1" y2="0"><stop offset="0" stop-color="#7e7e7e"/><stop offset="0.800" stop-color="#808080"/><stop offset="1" stop-color="#6c6c6c"/></linearGradient></defs><path d="M0 0.500H147L153.500 17H0Z" fill="url(#tbg)"/><path d="M0 0.500H147" stroke="#747474" fill="none"/><path d="M0.500 0.500L8.500 17H69L76.500 0.500M69 17L76.500 0.500M147 0.500L153.500 17" fill="none" stroke="#6a6a6a" stroke-width="1"/></svg>
<span class="t" style="left:21.5px;top:484px;font-size:11px;letter-spacing:-0.17px;">Explorer</span>
<span class="t" style="left:89px;top:484px;font-size:11px;letter-spacing:-0.20px;">Transitions</span>
<div style="left:158px;top:482px;width:15px;height:15px;background:#8a8a8a;border:1px solid #a8a8a8;border-right-color:#6a6a6a;border-bottom-color:#6a6a6a;"><svg style="left:4px;top:2px" width="6" height="9"><path d="M5 0.5V8.5L0.5 4.5Z" fill="#707070"/></svg></div>
<div style="left:174px;top:482px;width:15px;height:15px;background:#8a8a8a;border:1px solid #a8a8a8;border-right-color:#6a6a6a;border-bottom-color:#6a6a6a;"><svg style="left:4px;top:2px" width="6" height="9"><path d="M0.5 0.5V8.5L5 4.5Z" fill="#000"/></svg></div>
<div style="left:196px;top:70px;width:837px;height:431px;border:1px solid #737373;border-right-color:#adadad;border-bottom-color:#adadad;background:#8a8a8a;"></div>
<svg style="left:201px;top:75px;" width="9" height="8" viewBox="0 0 9 8"><path d="M1.200 0.300L7.800 6.200M7.800 0.300L1.200 6.200" stroke="#141418" stroke-width="1.900" fill="none"/></svg>
<svg style="left:202px;top:87px;" width="6" height="9" viewBox="0 0 6 9"><path d="M5.5 0.5V8.5L0.5 4.5Z" fill="#111"/></svg>
<svg style="left:202.5px;top:105px;" width="6" height="31.72" viewBox="0 0 6 31.72"><ellipse cx="3.200" cy="2.30" rx="1.500" ry="1" fill="#a8b4c4" opacity="0.550" transform="rotate(-25 3.200 2.30)"/><ellipse cx="2.600" cy="1.60" rx="1.700" ry="1.150" fill="#14161a" transform="rotate(-25 2.600 1.60)"/><ellipse cx="3.200" cy="7.42" rx="1.500" ry="1" fill="#a8b4c4" opacity="0.550" transform="rotate(-25 3.200 7.42)"/><ellipse cx="2.600" cy="6.72" rx="1.700" ry="1.150" fill="#14161a" transform="rotate(-25 2.600 6.72)"/><ellipse cx="3.200" cy="12.54" rx="1.500" ry="1" fill="#a8b4c4" opacity="0.550" transform="rotate(-25 3.200 12.54)"/><ellipse cx="2.600" cy="11.84" rx="1.700" ry="1.150" fill="#14161a" transform="rotate(-25 2.600 11.84)"/><ellipse cx="3.200" cy="17.66" rx="1.500" ry="1" fill="#a8b4c4" opacity="0.550" transform="rotate(-25 3.200 17.66)"/><ellipse cx="2.600" cy="16.96" rx="1.700" ry="1.150" fill="#14161a" transform="rotate(-25 2.600 16.96)"/><ellipse cx="3.200" cy="22.78" rx="1.500" ry="1" fill="#a8b4c4" opacity="0.550" transform="rotate(-25 3.200 22.78)"/><ellipse cx="2.600" cy="22.08" rx="1.700" ry="1.150" fill="#14161a" transform="rotate(-25 2.600 22.08)"/><ellipse cx="3.200" cy="27.90" rx="1.500" ry="1" fill="#a8b4c4" opacity="0.550" transform="rotate(-25 3.200 27.90)"/><ellipse cx="2.600" cy="27.20" rx="1.700" ry="1.150" fill="#14161a" transform="rotate(-25 2.600 27.20)"/></svg>
<svg style="left:216px;top:75px;" width="17" height="18" viewBox="0 0 17 18"><path d="M10 1L14.5 3L9 8.5L13 9.5L2 17L6.5 10L3.5 9Z" fill="#e8d060" stroke="#403810" stroke-width="0.9"/></svg>
<svg style="left:239px;top:75px;" width="18" height="18" viewBox="0 0 18 18"><rect x="1.5" y="1.5" width="5" height="4" fill="#80e0a0" stroke="#5060e0"/><rect x="8.500" y="1.5" width="5" height="4" fill="#80e0a0" stroke="#5060e0"/><path d="M15.500 1V12" stroke="#111" stroke-width="1.6"/><path d="M1.500 8.500V16.500H13.500L16 11H4L2 15" fill="#e8c870" stroke="#6a5020"/><path d="M1.5 8.500H6L7 10H12V11" fill="#e8c870" stroke="#6a5020"/></svg>
<svg style="left:263px;top:75px;" width="18" height="18" viewBox="0 0 18 18"><rect x="4" y="3" width="10" height="7" rx="1" fill="#4a4aa8" stroke="#111"/><rect x="1" y="2" width="5" height="2" fill="#111"/><path d="M14 5l3-1.500v6L14 8z" fill="#222"/><rect x="6" y="5" width="5" height="3" fill="#88a8e8"/><circle cx="4.500" cy="12.500" r="3" fill="#8a8080" stroke="#e03040" stroke-width="1.100"/><circle cx="4.500" cy="12.500" r="1.100" fill="#e03040"/></svg>
<svg style="left:287px;top:75px;" width="18" height="18" viewBox="0 0 18 18"><ellipse cx="8" cy="8" rx="7" ry="6.500" fill="#c8d4e4" stroke="#334" /><circle cx="8" cy="8" r="1.800" fill="#fff" stroke="#556"/><path d="M5 14.500C10 17 15 13 13.500 7.500L16.500 8L12 3L9 8L11.500 7.800C12 11 9 13.500 5 12.500Z" fill="#38b848" stroke="#0a5a18" stroke-width="0.700"/></svg>
<svg style="left:311px;top:75px;" width="18" height="18" viewBox="0 0 18 18"><circle cx="8" cy="8" r="7" fill="#4048b8" stroke="#0a0a20" stroke-width="1.200"/><path d="M3 5c2-1 3 1 2 3s-2 2-3 1zM9 2c2 0 4 1 4 3s-3 1-4 0zM5 12c1-1 3 0 3 2z" fill="#2a8a48"/><circle cx="9.500" cy="9.500" r="3.400" fill="#b8c8e0" stroke="#111" stroke-width="1.200"/><circle cx="8.800" cy="8.800" r="1.300" fill="#f0f4fc"/><path d="M12 12L16.500 16.500" stroke="#111" stroke-width="2.200"/></svg>
<div style="left:334px;top:75px;width:1px;height:18px;background:#5e5e5e;"></div>
<div style="left:335px;top:75px;width:1px;height:18px;background:#a8a8a8;"></div>
<svg style="left:345px;top:77px;" width="14" height="14" viewBox="0 0 14 14"><path d="M2 2L12 12M12 2L2 12" stroke="#6e6e6e" stroke-width="2" fill="none"/></svg>
<svg style="left:369px;top:76px;" width="15" height="15" viewBox="0 0 15 15"><rect x="1" y="1" width="13" height="13" rx="2" fill="#848484" stroke="#686868" stroke-width="1.200"/><path d="M3 5h4M3 8h4M3 11h4" stroke="#686868"/><path d="M8 4v8l2-2 1.500 3 1-.6-1.400-2.700 2.500-.3z" fill="#6e6e6e"/></svg>
<svg style="left:392px;top:78px;" width="14" height="12" viewBox="0 0 14 12"><circle cx="2.500" cy="6" r="1.600" fill="none" stroke="#727272"/><path d="M4 6H7" stroke="#727272"/><rect x="7" y="1" width="4" height="10" fill="#7e7e7e" stroke="#707070"/></svg>
<div style="left:212px;top:98px;width:32px;height:359px;background:#999;border:1px solid #6c6c6c;"></div>
<svg style="left:235px;top:99px;" width="8" height="34" viewBox="0 0 8 34"><rect x="0.500" y="0.500" width="9" height="7" fill="#90e0b0" stroke="#6a70ff"/><rect x="2.500" y="3.500" width="8" height="8" fill="#80e0a0" stroke="#6a70ff"/><rect x="5" y="6" width="4" height="9" fill="#111"/><rect x="6.500" y="8" width="2" height="5" fill="#80e0a0"/><circle cx="6" cy="7.500" r="0.800" fill="#fff"/><circle cx="6" cy="13.500" r="0.800" fill="#fff"/><rect x="2" y="16" width="8" height="15" fill="#ffe28a"/></svg>
<div style="left:213px;top:456px;width:31px;height:17px;background:#f0f0f0;"></div>
<svg style="left:219px;top:460px;" width="6" height="9" viewBox="0 0 6 9"><path d="M5.200 0.800L1.500 4.500L5.200 8.200" stroke="#4a4a4a" stroke-width="2" fill="none"/></svg>
<svg style="left:232px;top:460px;" width="6" height="9" viewBox="0 0 6 9"><path d="M0.800 0.800L4.500 4.500L0.800 8.200" stroke="#4a4a4a" stroke-width="2" fill="none"/></svg>
<div style="left:250px;top:98px;width:580px;height:375px;background:#999;border:1px solid #6c6c6c;"></div>
<div style="left:840px;top:70px;width:392px;height:431px;border:1px solid #737373;border-right-color:#adadad;border-bottom-color:#adadad;background:#8a8a8a;"></div>
<div style="left:850px;top:98px;width:369px;height:346px;background:#000;"></div>
<svg style="left:962px;top:450px;" width="68" height="14" viewBox="0 0 68 14"><defs><linearGradient id="pg" x1="0" y1="0" x2="0" y2="1"><stop offset="0" stop-color="#3a3e42"/><stop offset="1" stop-color="#6a6e72"/></linearGradient></defs><path d="M3.500 1.500L12 7L3.500 12.500Z" fill="url(#pg)" stroke="#222428"/><path d="M13.700 1V13" stroke="#222428" stroke-width="1.600"/><path d="M35 1.500L25.500 7L35 12.500Z" fill="url(#pg)" stroke="#222428"/><path d="M37 1V13M40 1V13" stroke="#222428" stroke-width="1.500"/><path d="M49.500 1V13M52.500 1V13" stroke="#222428" stroke-width="1.500"/><path d="M54.500 1.500L64.500 7L54.500 12.500Z" fill="url(#pg)" stroke="#222428"/></svg>
<div style="left:850px;top:471px;width:377px;height:1px;background:#b2b2b2;"></div>
<span class="t" style="left:920px;top:476px;color:#efefef;font-size:11px;">Frame: 0</span>
<span class="t" style="left:918px;top:488px;font-size:11px;letter-spacing:-0.01px;color:#efefef;">Display: 615x346x32</span>
<div style="left:1237px;top:70px;width:126px;height:431px;border:1px solid #737373;border-right-color:#adadad;border-bottom-color:#adadad;background:#8a8a8a;"></div>
<svg style="left:1241px;top:75px;" width="9" height="8" viewBox="0 0 9 8"><path d="M1.200 0.300L7.800 6.200M7.800 0.300L1.200 6.200" stroke="#141418" stroke-width="1.900" fill="none"/></svg>
<svg style="left:1242px;top:87px;" width="6" height="9" viewBox="0 0 6 9"><path d="M5.5 0.5V8.5L0.5 4.5Z" fill="#111"/></svg>
<svg style="left:1242.5px;top:105px;" width="6" height="31.72" viewBox="0 0 6 31.72"><ellipse cx="3.200" cy="2.30" rx="1.500" ry="1" fill="#a8b4c4" opacity="0.550" transform="rotate(-25 3.200 2.30)"/><ellipse cx="2.600" cy="1.60" rx="1.700" ry="1.150" fill="#14161a" transform="rotate(-25 2.600 1.60)"/><ellipse cx="3.200" cy="7.42" rx="1.500" ry="1" fill="#a8b4c4" opacity="0.550" transform="rotate(-25 3.200 7.42)"/><ellipse cx="2.600" cy="6.72" rx="1.700" ry="1.150" fill="#14161a" transform="rotate(-25 2.600 6.72)"/><ellipse cx="3.200" cy="12.54" rx="1.500" ry="1" fill="#a8b4c4" opacity="0.550" transform="rotate(-25 3.200 12.54)"/><ellipse cx="2.600" cy="11.84" rx="1.700" ry="1.150" fill="#14161a" transform="rotate(-25 2.600 11.84)"/><ellipse cx="3.200" cy="17.66" rx="1.500" ry="1" fill="#a8b4c4" opacity="0.550" transform="rotate(-25 3.200 17.66)"/><ellipse cx="2.600" cy="16.96" rx="1.700" ry="1.150" fill="#14161a" transform="rotate(-25 2.600 16.96)"/><ellipse cx="3.200" cy="22.78" rx="1.500" ry="1" fill="#a8b4c4" opacity="0.550" transform="rotate(-25 3.200 22.78)"/><ellipse cx="2.600" cy="22.08" rx="1.700" ry="1.150" fill="#14161a" transform="rotate(-25 2.600 22.08)"/><ellipse cx="3.200" cy="27.90" rx="1.500" ry="1" fill="#a8b4c4" opacity="0.550" transform="rotate(-25 3.200 27.90)"/><ellipse cx="2.600" cy="27.20" rx="1.700" ry="1.150" fill="#14161a" transform="rotate(-25 2.600 27.20)"/></svg>
<svg style="left:1269px;top:77px;" width="13" height="14" viewBox="0 0 13 14"><rect x="0.700" y="0.700" width="11.600" height="12.600" rx="2" fill="#c9d6ea" stroke="#1c2233" stroke-width="1.300"/><path d="M2.500 4h3.500M2.500 7h3.500M2.500 10h3.500" stroke="#1c2233"/><path d="M7 3v8.500l2-2 1.300 2.800 1.100-.6-1.300-2.600 2.400-.3z" fill="#000"/></svg>
<svg style="left:1292px;top:78px;" width="15" height="13" viewBox="0 0 15 13"><path d="M0.500 0.500L7 4.500V8.500L0.500 12.500ZM14.500 0.500L8 4.500V8.500L14.500 12.500Z" fill="#5e6a7e" stroke="#20242c"/></svg>
<svg style="left:1315px;top:77px;" width="17" height="14" viewBox="0 0 17 14"><path d="M0.500 5H3L7 1V13L3 9H0.500Z" fill="#8e96a4" stroke="#454a55"/><path d="M12.500 1V10M9.500 8.500L12.500 12.500L15.500 8.500Z" stroke="#141c4c" stroke-width="1.600" fill="#141c4c"/></svg>
<svg style="left:1339px;top:76px;" width="17" height="16" viewBox="0 0 17 16"><rect x="0.700" y="1.500" width="15.600" height="14" rx="2" fill="#e8eaf0" stroke="#15171c" stroke-width="1.400"/><rect x="0.700" y="1" width="15.600" height="3" fill="#15171c"/><path d="M4.500 6V14M8.500 6V14M12.500 6V14" stroke="#15171c" stroke-width="1.300"/><rect x="3" y="9.500" width="3" height="2" fill="#15171c"/><rect x="7" y="6.500" width="3" height="2" fill="#15171c"/><rect x="11" y="8" width="3" height="2" fill="#15171c"/></svg>
<div style="left:1253px;top:98px;width:106px;height:399px;background:#8c8c8c;border:1px solid #b4b4b4;border-right-color:#767676;border-bottom-color:#767676;"></div>
<div style="left:1257px;top:101px;width:22px;height:18px;background:#8b9cba;border:1px solid #62749a;"></div>
<svg style="left:1261px;top:104px;" width="14" height="13" viewBox="0 0 14 13"><rect x="1" y="1" width="12" height="11" fill="#c8c8c8" stroke="#1a1a1a" stroke-width="1.400"/><rect x="4.500" y="4.500" width="5" height="4" fill="#fff" stroke="#1a1a1a" stroke-width="1.200"/></svg>
<span class="t" style="left:1283px;top:105px;font-size:11px;letter-spacing:-0.36px;">Master</span>
<svg style="left:1258px;top:124px;" width="17" height="14" viewBox="0 0 17 14"><circle cx="2" cy="7" r="1.500" fill="none" stroke="#444"/><path d="M3.500 7H6M11 7H13" stroke="#444"/><rect x="6.500" y="2.500" width="4" height="9" fill="#8898b0" stroke="#3a4254"/><circle cx="14.500" cy="7" r="1.500" fill="none" stroke="#444"/></svg>
<svg style="left:1278px;top:123px;" width="16" height="16" viewBox="0 0 16 16"><rect x="6.800" y="0" width="2.400" height="3.500" fill="#3c3c3c" transform="rotate(0 8 8)"/><rect x="6.800" y="0" width="2.400" height="3.500" fill="#3c3c3c" transform="rotate(45 8 8)"/><rect x="6.800" y="0" width="2.400" height="3.500" fill="#3c3c3c" transform="rotate(90 8 8)"/><rect x="6.800" y="0" width="2.400" height="3.500" fill="#3c3c3c" transform="rotate(135 8 8)"/><rect x="6.800" y="0" width="2.400" height="3.500" fill="#3c3c3c" transform="rotate(180 8 8)"/><rect x="6.800" y="0" width="2.400" height="3.500" fill="#3c3c3c" transform="rotate(225 8 8)"/><rect x="6.800" y="0" width="2.400" height="3.500" fill="#3c3c3c" transform="rotate(270 8 8)"/><rect x="6.800" y="0" width="2.400" height="3.500" fill="#3c3c3c" transform="rotate(315 8 8)"/><circle cx="8" cy="8" r="5.600" fill="#3c3c3c"/><circle cx="8" cy="8" r="3.900" fill="#f0d0d0" stroke="#d02030" stroke-width="1.500"/><circle cx="8" cy="8" r="1.300" fill="#d02030" stroke="#400" stroke-width="0.500"/></svg>
<svg style="left:1298px;top:124px;" width="15" height="15" viewBox="0 0 15 15"><circle cx="7.500" cy="7.500" r="5.700" fill="#fff" stroke="#5a5ae0" stroke-width="2"/><path d="M3.500 4.500L11.500 10.500" stroke="#5a5ae0" stroke-width="2.200"/></svg>
<svg style="left:1322px;top:124px;" width="7" height="15" viewBox="0 0 7 15"><path d="M1.800 0.500H5.200L4.300 9.500H2.700Z" fill="#6a48c8" stroke="#2c1a70" stroke-width="0.600"/><rect x="2.300" y="11" width="2.400" height="2.600" fill="#6a48c8" stroke="#2c1a70" stroke-width="0.600"/></svg>
<span class="t" style="left:1296px;top:144px;font-size:10px;">-Inf.</span>
<span class="t" style="left:1326px;top:144px;font-size:10px;">-Inf.</span>
<div style="left:1301px;top:155px;width:9px;height:328px;border-left:1px solid #b4c4b6;border-right:1px solid #56665a;border-top:1px solid #6a645e;border-bottom:1px solid #56665a;background:linear-gradient(#6e5e5a 0px,#86766c 16px,#a09e88 38px,#98a08a 60px,#869684 100px,#7b9080 150px,#778d7d 100%);"></div>
<div style="left:1331px;top:155px;width:9px;height:328px;border-left:1px solid #b4c4b6;border-right:1px solid #56665a;border-top:1px solid #6a645e;border-bottom:1px solid #56665a;background:linear-gradient(#6e5e5a 0px,#86766c 16px,#a09e88 38px,#98a08a 60px,#869684 100px,#7b9080 150px,#778d7d 100%);"></div>
<span class="t" style="left:1311px;top:165px;font-size:10px;">-</span>
<span class="t" style="left:1327.5px;top:165px;font-size:10px;">-</span>
<span class="t" style="left:1313.500px;top:165.5px;width:13px;text-align:center;font-size:9.500px;letter-spacing:-0.200px;">3</span>
<span class="t" style="left:1311px;top:181px;font-size:10px;">-</span>
<span class="t" style="left:1327.5px;top:181px;font-size:10px;">-</span>
<span class="t" style="left:1313.500px;top:181.5px;width:13px;text-align:center;font-size:9.500px;letter-spacing:-0.200px;">6</span>
<span class="t" style="left:1311px;top:197px;font-size:10px;">-</span>
<span class="t" style="left:1327.5px;top:197px;font-size:10px;">-</span>
<span class="t" style="left:1313.500px;top:197.5px;width:13px;text-align:center;font-size:9.500px;letter-spacing:-0.200px;">9</span>
<span class="t" style="left:1311px;top:214px;font-size:10px;">-</span>
<span class="t" style="left:1327.5px;top:214px;font-size:10px;">-</span>
<span class="t" style="left:1313.500px;top:214.5px;width:13px;text-align:center;font-size:9.500px;letter-spacing:-0.200px;">12</span>
<span class="t" style="left:1311px;top:230px;font-size:10px;">-</span>
<span class="t" style="left:1327.5px;top:230px;font-size:10px;">-</span>
<span class="t" style="left:1313.500px;top:230.5px;width:13px;text-align:center;font-size:9.500px;letter-spacing:-0.200px;">15</span>
<span class="t" style="left:1311px;top:246px;font-size:10px;">-</span>
<span class="t" style="left:1327.5px;top:246px;font-size:10px;">-</span>
<span class="t" style="left:1313.500px;top:246.5px;width:13px;text-align:center;font-size:9.500px;letter-spacing:-0.200px;">18</span>
<span class="t" style="left:1311px;top:263px;font-size:10px;">-</span>
<span class="t" style="left:1327.5px;top:263px;font-size:10px;">-</span>
<span class="t" style="left:1313.500px;top:263.5px;width:13px;text-align:center;font-size:9.500px;letter-spacing:-0.200px;">21</span>
<span class="t" style="left:1311px;top:279px;font-size:10px;">-</span>
<span class="t" style="left:1327.5px;top:279px;font-size:10px;">-</span>
<span class="t" style="left:1313.500px;top:279.5px;width:13px;text-align:center;font-size:9.500px;letter-spacing:-0.200px;">24</span>
<span class="t" style="left:1311px;top:295px;font-size:10px;">-</span>
<span class="t" style="left:1327.5px;top:295px;font-size:10px;">-</span>
<span class="t" style="left:1313.500px;top:295.5px;width:13px;text-align:center;font-size:9.500px;letter-spacing:-0.200px;">27</span>
<span class="t" style="left:1311px;top:312px;font-size:10px;">-</span>
<span class="t" style="left:1327.5px;top:312px;font-size:10px;">-</span>
<span class="t" style="left:1313.500px;top:312.5px;width:13px;text-align:center;font-size:9.500px;letter-spacing:-0.200px;">30</span>
<span class="t" style="left:1311px;top:328px;font-size:10px;">-</span>
<span class="t" style="left:1327.5px;top:328px;font-size:10px;">-</span>
<span class="t" style="left:1313.500px;top:328.5px;width:13px;text-align:center;font-size:9.500px;letter-spacing:-0.200px;">33</span>
<span class="t" style="left:1311px;top:344px;font-size:10px;">-</span>
<span class="t" style="left:1327.5px;top:344px;font-size:10px;">-</span>
<span class="t" style="left:1313.500px;top:344.5px;width:13px;text-align:center;font-size:9.500px;letter-spacing:-0.200px;">36</span>
<span class="t" style="left:1311px;top:361px;font-size:10px;">-</span>
<span class="t" style="left:1327.5px;top:361px;font-size:10px;">-</span>
<span class="t" style="left:1313.500px;top:361.5px;width:13px;text-align:center;font-size:9.500px;letter-spacing:-0.200px;">39</span>
<span class="t" style="left:1311px;top:377px;font-size:10px;">-</span>
<span class="t" style="left:1327.5px;top:377px;font-size:10px;">-</span>
<span class="t" style="left:1313.500px;top:377.5px;width:13px;text-align:center;font-size:9.500px;letter-spacing:-0.200px;">42</span>
<span class="t" style="left:1311px;top:393px;font-size:10px;">-</span>
<span class="t" style="left:1327.5px;top:393px;font-size:10px;">-</span>
<span class="t" style="left:1313.500px;top:393.5px;width:13px;text-align:center;font-size:9.500px;letter-spacing:-0.200px;">45</span>
<span class="t" style="left:1311px;top:410px;font-size:10px;">-</span>
<span class="t" style="left:1327.5px;top:410px;font-size:10px;">-</span>
<span class="t" style="left:1313.500px;top:410.5px;width:13px;text-align:center;font-size:9.500px;letter-spacing:-0.200px;">48</span>
<span class="t" style="left:1311px;top:426px;font-size:10px;">-</span>
<span class="t" style="left:1327.5px;top:426px;font-size:10px;">-</span>
<span class="t" style="left:1313.500px;top:426.5px;width:13px;text-align:center;font-size:9.500px;letter-spacing:-0.200px;">51</span>
<span class="t" style="left:1311px;top:442px;font-size:10px;">-</span>
<span class="t" style="left:1327.5px;top:442px;font-size:10px;">-</span>
<span class="t" style="left:1313.500px;top:442.5px;width:13px;text-align:center;font-size:9.500px;letter-spacing:-0.200px;">54</span>
<span class="t" style="left:1311px;top:459px;font-size:10px;">-</span>
<span class="t" style="left:1327.5px;top:459px;font-size:10px;">-</span>
<span class="t" style="left:1313.500px;top:459.5px;width:13px;text-align:center;font-size:9.500px;letter-spacing:-0.200px;">57</span>
<div style="left:1273px;top:165px;width:2px;height:298px;background:#707070;"></div>
<div style="left:1275px;top:165px;width:1px;height:298px;background:#b2b2b2;"></div>
<div style="left:1262px;top:264px;width:25px;height:18px;border-radius:2.500px;background:linear-gradient(#d8d8d8 0%,#fdfdfd 12%,#e4e4e4 28%,#b4b4b4 44%,#4a4a4a 49%,#5a5a5a 52%,#f4f4f4 58%,#e8e8e8 75%,#b0b0b0 92%,#909090 100%);border:1px solid #8a8a8a;box-shadow:0 1px 1px rgba(0,0,0,0.300);"></div>
<div style="left:1274px;top:264px;width:1px;height:18px;background:rgba(90,90,90,0.700);"></div>
<svg style="left:1270px;top:478px;" width="9" height="11" viewBox="0 0 9 11"><path d="M2.500 5V3.200a2 2 0 0 1 4 0V5" fill="none" stroke="#1e2230" stroke-width="1.300"/><rect x="1" y="5" width="7" height="5.500" rx="0.800" fill="#46506a" stroke="#1e2230"/><rect x="3.800" y="6.500" width="1.400" height="2.500" fill="#c8d0e0"/></svg>
<span class="t" style="left:1298px;top:484px;font-size:10px;">0,0</span>
<span class="t" style="left:1328px;top:484px;font-size:10px;">0,0</span>
<div style="left:0px;top:505px;width:1366px;height:1px;background:#6e6e6e;"></div>
<div style="left:0px;top:506px;width:1366px;height:1px;background:#b0b0b0;"></div>
<svg style="left:7.5px;top:512px;" width="6" height="31.72" viewBox="0 0 6 31.72"><ellipse cx="3.200" cy="2.30" rx="1.500" ry="1" fill="#a8b4c4" opacity="0.550" transform="rotate(-25 3.200 2.30)"/><ellipse cx="2.600" cy="1.60" rx="1.700" ry="1.150" fill="#14161a" transform="rotate(-25 2.600 1.60)"/><ellipse cx="3.200" cy="7.42" rx="1.500" ry="1" fill="#a8b4c4" opacity="0.550" transform="rotate(-25 3.200 7.42)"/><ellipse cx="2.600" cy="6.72" rx="1.700" ry="1.150" fill="#14161a" transform="rotate(-25 2.600 6.72)"/><ellipse cx="3.200" cy="12.54" rx="1.500" ry="1" fill="#a8b4c4" opacity="0.550" transform="rotate(-25 3.200 12.54)"/><ellipse cx="2.600" cy="11.84" rx="1.700" ry="1.150" fill="#14161a" transform="rotate(-25 2.600 11.84)"/><ellipse cx="3.200" cy="17.66" rx="1.500" ry="1" fill="#a8b4c4" opacity="0.550" transform="rotate(-25 3.200 17.66)"/><ellipse cx="2.600" cy="16.96" rx="1.700" ry="1.150" fill="#14161a" transform="rotate(-25 2.600 16.96)"/><ellipse cx="3.200" cy="22.78" rx="1.500" ry="1" fill="#a8b4c4" opacity="0.550" transform="rotate(-25 3.200 22.78)"/><ellipse cx="2.600" cy="22.08" rx="1.700" ry="1.150" fill="#14161a" transform="rotate(-25 2.600 22.08)"/><ellipse cx="3.200" cy="27.90" rx="1.500" ry="1" fill="#a8b4c4" opacity="0.550" transform="rotate(-25 3.200 27.90)"/><ellipse cx="2.600" cy="27.20" rx="1.700" ry="1.150" fill="#14161a" transform="rotate(-25 2.600 27.20)"/></svg>
<span class="t" style="left:137.6px;top:518px;font-size:23px;letter-spacing:-1.26px;color:#1a1a1a;">00:00:00:00</span>
<div style="left:3px;top:552px;width:248px;height:110px;border:1px solid #767676;border-right-color:#a8a8a8;border-bottom-color:#a8a8a8;"></div>
<div style="left:256px;top:507px;width:1px;height:172px;background:#6c6c6c;"></div>
<div style="left:257px;top:507px;width:1px;height:29px;background:#a8a8a8;"></div>
<div style="left:257px;top:553px;width:1090px;height:108px;background:#7b7b7b;"></div>
<div style="left:257px;top:536px;width:1px;height:126px;background:#000;"></div>
<div style="left:258px;top:528px;width:52px;height:8px;background:#6b6b6b;"></div>
<svg style="left:258px;top:528px;" width="8" height="8" viewBox="0 0 8 8"><path d="M0 0H8L0 8Z" fill="#ffee00"/></svg>
<svg style="left:302px;top:528px;" width="8" height="8" viewBox="0 0 8 8"><path d="M0 0H8V8Z" fill="#ffee00"/></svg>
<div style="left:257px;top:536px;width:1089px;height:1px;background:#a4a4a4;"></div>
<div style="left:1345px;top:507px;width:1px;height:46px;background:#a8a8a8;"></div>
<svg style="left:257px;top:536px;" width="1089" height="17" viewBox="0 0 1089 17"><rect x="1" y="5" width="1" height="12" fill="#d0d0d0"/><rect x="9" y="14" width="1" height="3" fill="#c4c4c4"/><rect x="18" y="14" width="1" height="3" fill="#c4c4c4"/><rect x="27" y="14" width="1" height="3" fill="#c4c4c4"/><rect x="36" y="14" width="1" height="3" fill="#c4c4c4"/><rect x="45" y="14" width="1" height="3" fill="#c4c4c4"/><rect x="54" y="14" width="1" height="3" fill="#c4c4c4"/><rect x="63" y="14" width="1" height="3" fill="#c4c4c4"/><rect x="71" y="14" width="1" height="3" fill="#c4c4c4"/><rect x="80" y="14" width="1" height="3" fill="#c4c4c4"/><rect x="89" y="14" width="1" height="3" fill="#c4c4c4"/><rect x="98" y="14" width="1" height="3" fill="#c4c4c4"/><rect x="107" y="14" width="1" height="3" fill="#c4c4c4"/><rect x="116" y="14" width="1" height="3" fill="#c4c4c4"/><rect x="125" y="14" width="1" height="3" fill="#c4c4c4"/><rect x="134" y="5" width="1" height="12" fill="#d0d0d0"/><rect x="142" y="14" width="1" height="3" fill="#c4c4c4"/><rect x="151" y="14" width="1" height="3" fill="#c4c4c4"/><rect x="160" y="14" width="1" height="3" fill="#c4c4c4"/><rect x="169" y="14" width="1" height="3" fill="#c4c4c4"/><rect x="178" y="14" width="1" height="3" fill="#c4c4c4"/><rect x="187" y="14" width="1" height="3" fill="#c4c4c4"/><rect x="196" y="14" width="1" height="3" fill="#c4c4c4"/><rect x="205" y="14" width="1" height="3" fill="#c4c4c4"/><rect x="213" y="14" width="1" height="3" fill="#c4c4c4"/><rect x="222" y="14" width="1" height="3" fill="#c4c4c4"/><rect x="231" y="14" width="1" height="3" fill="#c4c4c4"/><rect x="240" y="14" width="1" height="3" fill="#c4c4c4"/><rect x="249" y="14" width="1" height="3" fill="#c4c4c4"/><rect x="258" y="14" width="1" height="3" fill="#c4c4c4"/><rect x="267" y="5" width="1" height="12" fill="#d0d0d0"/><rect x="276" y="14" width="1" height="3" fill="#c4c4c4"/><rect x="284" y="14" width="1" height="3" fill="#c4c4c4"/><rect x="293" y="14" width="1" height="3" fill="#c4c4c4"/><rect x="302" y="14" width="1" height="3" fill="#c4c4c4"/><rect x="311" y="14" width="1" height="3" fill="#c4c4c4"/><rect x="320" y="14" width="1" height="3" fill="#c4c4c4"/><rect x="329" y="14" width="1" height="3" fill="#c4c4c4"/><rect x="338" y="14" width="1" height="3" fill="#c4c4c4"/><rect x="347" y="14" width="1" height="3" fill="#c4c4c4"/><rect x="355" y="14" width="1" height="3" fill="#c4c4c4"/><rect x="364" y="14" width="1" height="3" fill="#c4c4c4"/><rect x="373" y="14" width="1" height="3" fill="#c4c4c4"/><rect x="382" y="14" width="1" height="3" fill="#c4c4c4"/><rect x="391" y="14" width="1" height="3" fill="#c4c4c4"/><rect x="400" y="5" width="1" height="12" fill="#d0d0d0"/><rect x="409" y="14" width="1" height="3" fill="#c4c4c4"/><rect x="418" y="14" width="1" height="3" fill="#c4c4c4"/><rect x="426" y="14" width="1" height="3" fill="#c4c4c4"/><rect x="435" y="14" width="1" height="3" fill="#c4c4c4"/><rect x="444" y="14" width="1" height="3" fill="#c4c4c4"/><rect x="453" y="14" width="1" height="3" fill="#c4c4c4"/><rect x="462" y="14" width="1" height="3" fill="#c4c4c4"/><rect x="471" y="14" width="1" height="3" fill="#c4c4c4"/><rect x="480" y="14" width="1" height="3" fill="#c4c4c4"/><rect x="489" y="14" width="1" height="3" fill="#c4c4c4"/><rect x="497" y="14" width="1" height="3" fill="#c4c4c4"/><rect x="506" y="14" width="1" height="3" fill="#c4c4c4"/><rect x="515" y="14" width="1" height="3" fill="#c4c4c4"/><rect x="524" y="14" width="1" height="3" fill="#c4c4c4"/><rect x="533" y="5" width="1" height="12" fill="#d0d0d0"/><rect x="542" y="14" width="1" height="3" fill="#c4c4c4"/><rect x="551" y="14" width="1" height="3" fill="#c4c4c4"/><rect x="560" y="14" width="1" height="3" fill="#c4c4c4"/><rect x="568" y="14" width="1" height="3" fill="#c4c4c4"/><rect x="577" y="14" width="1" height="3" fill="#c4c4c4"/><rect x="586" y="14" width="1" height="3" fill="#c4c4c4"/><rect x="595" y="14" width="1" height="3" fill="#c4c4c4"/><rect x="604" y="14" width="1" height="3" fill="#c4c4c4"/><rect x="613" y="14" width="1" height="3" fill="#c4c4c4"/><rect x="622" y="14" width="1" height="3" fill="#c4c4c4"/><rect x="631" y="14" width="1" height="3" fill="#c4c4c4"/><rect x="639" y="14" width="1" height="3" fill="#c4c4c4"/><rect x="648" y="14" width="1" height="3" fill="#c4c4c4"/><rect x="657" y="14" width="1" height="3" fill="#c4c4c4"/><rect x="666" y="5" width="1" height="12" fill="#d0d0d0"/><rect x="675" y="14" width="1" height="3" fill="#c4c4c4"/><rect x="684" y="14" width="1" height="3" fill="#c4c4c4"/><rect x="693" y="14" width="1" height="3" fill="#c4c4c4"/><rect x="701" y="14" width="1" height="3" fill="#c4c4c4"/><rect x="710" y="14" width="1" height="3" fill="#c4c4c4"/><rect x="719" y="14" width="1" height="3" fill="#c4c4c4"/><rect x="728" y="14" width="1" height="3" fill="#c4c4c4"/><rect x="737" y="14" width="1" height="3" fill="#c4c4c4"/><rect x="746" y="14" width="1" height="3" fill="#c4c4c4"/><rect x="755" y="14" width="1" height="3" fill="#c4c4c4"/><rect x="764" y="14" width="1" height="3" fill="#c4c4c4"/><rect x="772" y="14" width="1" height="3" fill="#c4c4c4"/><rect x="781" y="14" width="1" height="3" fill="#c4c4c4"/><rect x="790" y="14" width="1" height="3" fill="#c4c4c4"/><rect x="799" y="5" width="1" height="12" fill="#d0d0d0"/><rect x="808" y="14" width="1" height="3" fill="#c4c4c4"/><rect x="817" y="14" width="1" height="3" fill="#c4c4c4"/><rect x="826" y="14" width="1" height="3" fill="#c4c4c4"/><rect x="835" y="14" width="1" height="3" fill="#c4c4c4"/><rect x="843" y="14" width="1" height="3" fill="#c4c4c4"/><rect x="852" y="14" width="1" height="3" fill="#c4c4c4"/><rect x="861" y="14" width="1" height="3" fill="#c4c4c4"/><rect x="870" y="14" width="1" height="3" fill="#c4c4c4"/><rect x="879" y="14" width="1" height="3" fill="#c4c4c4"/><rect x="888" y="14" width="1" height="3" fill="#c4c4c4"/><rect x="897" y="14" width="1" height="3" fill="#c4c4c4"/><rect x="906" y="14" width="1" height="3" fill="#c4c4c4"/><rect x="914" y="14" width="1" height="3" fill="#c4c4c4"/><rect x="923" y="14" width="1" height="3" fill="#c4c4c4"/><rect x="932" y="5" width="1" height="12" fill="#d0d0d0"/><rect x="941" y="14" width="1" height="3" fill="#c4c4c4"/><rect x="950" y="14" width="1" height="3" fill="#c4c4c4"/><rect x="959" y="14" width="1" height="3" fill="#c4c4c4"/><rect x="968" y="14" width="1" height="3" fill="#c4c4c4"/><rect x="977" y="14" width="1" height="3" fill="#c4c4c4"/><rect x="985" y="14" width="1" height="3" fill="#c4c4c4"/><rect x="994" y="14" width="1" height="3" fill="#c4c4c4"/><rect x="1003" y="14" width="1" height="3" fill="#c4c4c4"/><rect x="1012" y="14" width="1" height="3" fill="#c4c4c4"/><rect x="1021" y="14" width="1" height="3" fill="#c4c4c4"/><rect x="1030" y="14" width="1" height="3" fill="#c4c4c4"/><rect x="1039" y="14" width="1" height="3" fill="#c4c4c4"/><rect x="1048" y="14" width="1" height="3" fill="#c4c4c4"/><rect x="1056" y="14" width="1" height="3" fill="#c4c4c4"/><rect x="1065" y="5" width="1" height="12" fill="#d0d0d0"/><rect x="1074" y="14" width="1" height="3" fill="#c4c4c4"/><rect x="1083" y="14" width="1" height="3" fill="#c4c4c4"/></svg>
<div style="left:257px;top:536px;width:1088px;height:16px;overflow:hidden;"><span class="t" style="left:1.5px;top:4.5px;font-size:10px;letter-spacing:-0.39px;color:#0a0a0a;">00:00:00:00</span>
<span class="t" style="left:134.5px;top:4.5px;font-size:10px;letter-spacing:-0.39px;color:#0a0a0a;">00:00:15:00</span>
<span class="t" style="left:267.5px;top:4.5px;font-size:10px;letter-spacing:-0.39px;color:#0a0a0a;">00:00:29:29</span>
<span class="t" style="left:401.0px;top:4.5px;font-size:10px;letter-spacing:-0.39px;color:#0a0a0a;">00:00:44:29</span>
<span class="t" style="left:534.0px;top:4.5px;font-size:10px;letter-spacing:-0.39px;color:#0a0a0a;">00:00:59:28</span>
<span class="t" style="left:667.0px;top:4.5px;font-size:10px;letter-spacing:-0.39px;color:#0a0a0a;">00:01:14:22</span>
<span class="t" style="left:800.0px;top:4.5px;font-size:10px;letter-spacing:-0.39px;color:#0a0a0a;">00:01:29:22</span>
<span class="t" style="left:933.0px;top:4.5px;font-size:10px;letter-spacing:-0.39px;color:#0a0a0a;">00:01:44:21</span>
<span class="t" style="left:1066.5px;top:4.5px;font-size:10px;letter-spacing:-0.38px;color:#0a0a0a;">00:0:</span>
</div>
<svg style="left:256px;top:536px;" width="8" height="18" viewBox="0 0 8 18"><defs><linearGradient id="ch" x1="0" y1="0" x2="1" y2="0"><stop offset="0" stop-color="#9aa4b4"/><stop offset="0.450" stop-color="#f4f6fa"/><stop offset="1" stop-color="#b8c0cc"/></linearGradient></defs><path d="M0.500 0H6.500V10.500L1 17H0.500Z" fill="url(#ch)" stroke="#5a6270" stroke-width="0.800"/><path d="M3 2V7.500" stroke="#3a4048" stroke-width="1.300"/></svg>
<div style="left:1347px;top:507px;width:16px;height:155px;background:#5e5e5e;"></div>
<div style="left:1348px;top:507px;width:15px;height:15px;border:1px solid #424242;border-radius:2.500px;background:linear-gradient(90deg,#a8a9a9,#8a8c8d 50%,#6c7072);"><svg style="left:2px;top:1.500px" width="10" height="11"><path d="M0.500 0.500H8.500V6.500H3L0.500 10Z" fill="#000"/><rect x="3" y="2.500" width="3.500" height="2" fill="#9a9a9a"/></svg></div>
<div style="left:1348px;top:524px;width:15px;height:15px;border:1px solid #424242;border-radius:2.500px;background:linear-gradient(90deg,#a8a9a9,#8a8c8d 50%,#6c7072);"><svg style="left:3px;top:4px" width="8" height="5"><path d="M0 5H8L4 0Z" fill="#5c5c5c"/></svg></div>
<div style="left:1348px;top:605px;width:15px;height:15px;border:1px solid #424242;border-radius:2.500px;background:linear-gradient(90deg,#a8a9a9,#8a8c8d 50%,#6c7072);"><svg style="left:3px;top:4px" width="8" height="5"><path d="M0 0H8L4 5Z" fill="#5c5c5c"/></svg></div>
<div style="left:1348px;top:622px;width:15px;height:15px;border:1px solid #424242;border-radius:2.500px;background:linear-gradient(90deg,#a8a9a9,#8a8c8d 50%,#6c7072);"><svg style="left:3px;top:3px" width="8" height="8"><path d="M4 0.500V7.500M0.500 4H7.500" stroke="#5c5c5c" stroke-width="1.800"/></svg></div>
<div style="left:1348px;top:639px;width:15px;height:5px;border:1px solid #424242;border-radius:2.500px;background:linear-gradient(90deg,#a8a9a9,#8a8c8d 50%,#6c7072);"></div>
<div style="left:1348px;top:645px;width:15px;height:15px;border:1px solid #424242;border-radius:2.500px;background:linear-gradient(90deg,#a8a9a9,#8a8c8d 50%,#6c7072);"><svg style="left:3px;top:3px" width="8" height="8"><path d="M0.500 4H7.500" stroke="#5c5c5c" stroke-width="1.800"/></svg></div>
<div style="left:257px;top:662px;width:1106px;height:16px;background:#5a5a5a;"></div>
<div style="left:257px;top:662px;width:17px;height:16px;border:1px solid #424242;border-radius:2.500px;background:linear-gradient(#a8a9a9,#8a8c8d 50%,#6c7072);"><svg style="left:4px;top:3px" width="6" height="9"><path d="M5.500 0.500V8.500L0.500 4.500Z" fill="#000"/></svg></div>
<div style="left:275px;top:662px;width:1014px;height:16px;border:1px solid #3e3e3e;border-radius:3px;background:linear-gradient(#a8a9a9,#8a8c8d 50%,#6a6e70);"></div>
<svg style="left:279px;top:665px;" width="6" height="10" viewBox="0 0 6 10"><path d="M1.500 0V10M4.500 0V10" stroke="#222" stroke-width="1"/><path d="M2.500 0V10M5.500 0V10" stroke="#c8c8c8" stroke-width="1" opacity="0.700"/></svg>
<svg style="left:1282px;top:665px;" width="6" height="10" viewBox="0 0 6 10"><path d="M1.500 0V10M4.500 0V10" stroke="#222" stroke-width="1"/><path d="M2.500 0V10M5.500 0V10" stroke="#c8c8c8" stroke-width="1" opacity="0.700"/></svg>
<div style="left:1291px;top:662px;width:16px;height:16px;border:1px solid #424242;border-radius:2.500px;background:linear-gradient(#a8a9a9,#8a8c8d 50%,#6c7072);"><svg style="left:5px;top:3px" width="6" height="9"><path d="M0.500 0.500V8.500L5.500 4.500Z" fill="#000"/></svg></div>
<div style="left:1308px;top:662px;width:16px;height:16px;border:1px solid #424242;border-radius:2.500px;background:linear-gradient(#a8a9a9,#8a8c8d 50%,#6c7072);"><svg style="left:4px;top:3px" width="9" height="9"><path d="M4.500 0.500V8.500M0.500 4.500H8.500" stroke="#000" stroke-width="2"/></svg></div>
<div style="left:1325px;top:662px;width:4px;height:16px;border:1px solid #424242;border-radius:2.500px;background:linear-gradient(#a8a9a9,#8a8c8d 50%,#6c7072);"></div>
<div style="left:1330px;top:662px;width:16px;height:16px;border:1px solid #424242;border-radius:2.500px;background:linear-gradient(#a8a9a9,#8a8c8d 50%,#6c7072);"><svg style="left:4px;top:3px" width="9" height="9"><path d="M0.500 4.500H8.500" stroke="#000" stroke-width="2"/></svg></div>
<div style="left:1347px;top:662px;width:16px;height:16px;border:1px solid #424242;border-radius:2.500px;background:linear-gradient(#a8a9a9,#8a8c8d 50%,#6c7072);"><svg style="left:3px;top:2px" width="11" height="11"><circle cx="4.500" cy="4.500" r="3.200" fill="#d8d8d8" stroke="#000" stroke-width="1.300"/><path d="M7 7L10 10" stroke="#000" stroke-width="1.800"/></svg></div>
<div style="left:257px;top:678px;width:1107px;height:1px;background:#b4b4b4;"></div>
<div style="left:256px;top:705px;width:1108px;height:1px;background:#707070;"></div>
<div style="left:256px;top:706px;width:1108px;height:1px;background:#b4b4b4;"></div>
<div style="left:256px;top:679px;width:1px;height:26px;background:#6c6c6c;"></div>
<div style="left:257px;top:679px;width:1px;height:26px;background:#b4b4b4;"></div>
<div style="left:1363px;top:679px;width:1px;height:27px;background:#b0b0b0;"></div>
<svg style="left:256px;top:679px;" width="245" height="27" viewBox="0 0 245 27"><defs><linearGradient id="tg" x1="0" y1="0" x2="0" y2="1"><stop offset="0" stop-color="#2e3236"/><stop offset="1" stop-color="#5c6064"/></linearGradient></defs><circle cx="13" cy="13" r="6.300" fill="#9a8a8a" stroke="#d84050" stroke-width="1.300"/><circle cx="13" cy="13" r="2.600" fill="#c02838" stroke="#1a1a1a" stroke-width="1"/><path d="M40.500 10.200A4.800 4.800 0 1 1 35.200 8.500" fill="none" stroke="#2a2c30" stroke-width="1.500"/><path d="M34.500 5.500L38.700 8.300L34.800 11Z" fill="#2a2c30"/><path d="M54.500 7V19" stroke="#24262a" stroke-width="1.500"/><path d="M57.500 7.500L68 13L57.500 18.500Z" fill="url(#tg)" stroke="#24262a"/><path d="M78.500 7.500L92.500 13L78.500 18.500Z" fill="url(#tg)" stroke="#24262a"/><rect x="104.500" y="7.500" width="3.500" height="11" fill="url(#tg)" stroke="#24262a"/><rect x="111.500" y="7.500" width="3.500" height="11" fill="url(#tg)" stroke="#24262a"/><rect x="128.500" y="7.500" width="11" height="11" fill="url(#tg)" stroke="#24262a"/><path d="M152.500 7V19" stroke="#24262a" stroke-width="1.600"/><path d="M163 7.500L154 13L163 18.500Z" fill="url(#tg)" stroke="#24262a"/><path d="M185.500 7V19" stroke="#24262a" stroke-width="1.600"/><path d="M175 7.500L184 13L175 18.500Z" fill="url(#tg)" stroke="#24262a"/><path d="M207 7.500L197 13L207 18.500Z" fill="url(#tg)" stroke="#24262a"/><path d="M209.500 7V19M212.500 7V19" stroke="#24262a" stroke-width="1.500"/><path d="M221.500 7V19M224.500 7V19" stroke="#24262a" stroke-width="1.500"/><path d="M227 7.500L237 13L227 18.500Z" fill="url(#tg)" stroke="#24262a"/></svg>
<svg style="left:1091px;top:684px;" width="9" height="17" viewBox="0 0 9 17"><rect x="1.500" y="0.500" width="6" height="10" rx="2.500" fill="#c8d0e0" stroke="#1a1e2a"/><rect x="3.500" y="3" width="2" height="5" fill="#1a1e2a"/><path d="M4.500 10.500V16" stroke="#1a1e2a" stroke-width="2"/></svg>
<div style="left:1106px;top:684px;width:66px;height:17px;border:1px solid #747474;border-right-color:#a6a6a6;border-bottom-color:#a6a6a6;"><span class="t" style="left:2.500px;top:3px;font-size:11.500px;letter-spacing:-0.12px;color:#000;">00:00:00:00</span></div>
<svg style="left:1185px;top:687px;" width="9" height="9" viewBox="0 0 9 9"><path d="M0.500 0.500H8.500V8.500Z" fill="#d8d020" stroke="#5a5400"/></svg>
<div style="left:1200px;top:684px;width:66px;height:17px;border:1px solid #747474;border-right-color:#a6a6a6;border-bottom-color:#a6a6a6;"><span class="t" style="left:2.500px;top:3px;font-size:11.500px;letter-spacing:-0.12px;color:#000;"></span></div>
<svg style="left:1276px;top:685px;" width="16" height="15" viewBox="0 0 16 15"><rect x="0.500" y="0.500" width="15" height="7" fill="#c4bc3c"/><path d="M0.500 7.500L8 1L15.500 7.500Z" fill="#5c6672"/><rect x="0.500" y="7.500" width="15" height="6.500" fill="#203878"/><rect x="0.500" y="0.500" width="15" height="13.500" fill="none" stroke="#4a4a3a" stroke-width="0.800"/></svg>
<div style="left:1294px;top:684px;width:66px;height:17px;border:1px solid #747474;border-right-color:#a6a6a6;border-bottom-color:#a6a6a6;"><span class="t" style="left:2.500px;top:3px;font-size:11.500px;letter-spacing:-0.12px;color:#6a6a6a;">00:00:06:00</span></div>
<span class="t" style="left:7px;top:678px;font-size:11px;">Rate: 0,00</span>
<div style="left:89px;top:685px;width:149px;height:1px;background:#6a6a6a;"></div>
<div style="left:89px;top:686px;width:149px;height:1px;background:#a4a4a4;"></div>
<svg style="left:149px;top:679px;" width="27" height="13" viewBox="0 0 27 13"><path d="M0.500 6.500L8 0.500V12.500Z" fill="#5a6064" stroke="#222"/><path d="M8 6.500L13.500 0.500L19 6.500L13.500 12.500Z" fill="#5a6064" stroke="#222"/><path d="M26.500 6.500L19 0.500V12.500Z" fill="#5a6064" stroke="#222"/><path d="M13.500 0.500V12.500" stroke="#222"/></svg>
<svg style="left:172px;top:692px;" width="12" height="12" viewBox="0 0 12 12"><path d="M5.800 1L10.800 10.500H0.800Z" fill="#d07848" stroke="#8a4020"/></svg>
<div style="left:1138px;top:710px;width:225px;height:18px;border:1px solid #747474;border-right-color:#a6a6a6;border-bottom-color:#a6a6a6;"></div>
<span class="t" style="left:1140.5px;top:714px;font-size:11px;letter-spacing:-0.09px;">Record Time (2 channels): 36:13:15</span>
<div style="left:0px;top:728px;width:1366px;height:40px;background:#0d0d0d;"></div>
<svg style="left:16px;top:740px;" width="16" height="16" viewBox="0 0 16 16"><path d="M0 2.300L6.600 1.400V7.500H0ZM7.400 1.300L16 0V7.500H7.400ZM0 8.300H6.600V14.500L0 13.600ZM7.400 8.300H16V16L7.400 14.700Z" fill="#fff"/></svg>
<svg style="left:64px;top:739px;" width="18" height="18" viewBox="0 0 18 18"><circle cx="11" cy="6.500" r="5" fill="none" stroke="#fff" stroke-width="1.400"/><path d="M7.500 10.200L1 16.700" stroke="#fff" stroke-width="1.600"/></svg>
<svg style="left:111px;top:740px;" width="18" height="16" viewBox="0 0 18 16"><rect x="2.700" y="3.700" width="9.600" height="8.600" fill="none" stroke="#fff" stroke-width="1.400"/><path d="M1 1.700H5M10 1.700H14M1 14.300H5M10 14.300H14" stroke="#fff" stroke-width="1.400"/><path d="M15.700 1V15" stroke="#fff" stroke-width="1.400"/><rect x="14.500" y="5" width="2.500" height="3" fill="#fff"/></svg>
<div style="left:151px;top:766px;width:40px;height:2px;background:#76b9ed;"></div>
<svg style="left:159px;top:738px;" width="24" height="20" viewBox="0 0 24 20"><path d="M1 2.500H8L10 4.500H23V18H1Z" fill="#f5d36b"/><path d="M1 6H23V18H1Z" fill="#fbe38f"/><path d="M2 2.500H7" stroke="#59c0f0" stroke-width="1.500"/><path d="M6.500 19V12H17.500V19H14.500V15H9.500V19Z" fill="#3c9ee0"/><rect x="6.500" y="11" width="11" height="2.500" fill="#58b4ec"/></svg>
<svg style="left:207px;top:738px;" width="26" height="20" viewBox="0 0 26 20"><path d="M6 1L24 6L19 15L1 9Z" fill="#e8321a"/><path d="M1 9L19 15V19L1 13Z" fill="#c8c8c8"/><path d="M1 9L19 15L24 6V10L19 19L1 13Z" fill="none" stroke="#c22810" stroke-width="1"/><path d="M19 15L24 6V10L19 19Z" fill="#d02c14"/><path d="M8 4L16 6.300" stroke="#f8a090" stroke-width="1.200"/></svg>
<svg style="left:256px;top:737px;" width="28" height="22" viewBox="0 0 28 22"><ellipse cx="12" cy="10" rx="11" ry="8" fill="#f0f0f0" stroke="#e03030" stroke-width="1.300" transform="rotate(-18 12 10)"/><path d="M3 15C8 19 16 17 20 12" stroke="#b8b8c0" stroke-width="2.500" fill="none"/><path d="M12 4L18 14M19 5L14 14" stroke="#70787c" stroke-width="1.300"/><circle cx="19.500" cy="17.500" r="2.600" fill="none" stroke="#1e90e0" stroke-width="1.600"/><circle cx="13.500" cy="18.500" r="2.600" fill="none" stroke="#1e90e0" stroke-width="1.600"/></svg>
<svg style="left:309px;top:736px;" width="18" height="24" viewBox="0 0 18 24"><ellipse cx="9" cy="12" rx="8.500" ry="11.500" fill="#0a84ec"/><path d="M4.500 7.500L13 15.500L9 19.500V4.500L13 8.500L4.500 16.500" fill="none" stroke="#fff" stroke-width="1.500"/></svg>
<svg style="left:355px;top:736px;" width="24" height="24" viewBox="0 0 24 24"><circle cx="12" cy="12" r="11" fill="#e33b2e"/><path d="M12 12L2.500 6.500A11 11 0 0 0 7 21.800Z" fill="#2da94f"/><path d="M12 12L7 21.800A11 11 0 0 0 22.500 8.500Z" fill="#fdd308"/><path d="M12 12L22.600 9A11 11 0 0 0 2.500 6.500Z" fill="#e33b2e"/><path d="M2.500 6.500A11 11 0 0 0 6.800 21.700L12 12Z" fill="#2da94f"/><circle cx="12" cy="12" r="5" fill="#fff"/><circle cx="12" cy="12" r="4" fill="#4a8af4"/></svg>
<div style="left:392px;top:728px;width:48px;height:40px;background:#363636;"></div>
<div style="left:392px;top:766px;width:48px;height:2px;background:#76b9ed;"></div>
<svg style="left:404px;top:736px;" width="24" height="24" viewBox="0 0 20 20"><defs><radialGradient id="vg404736" cx="0.5" cy="0.5" r="0.5"><stop offset="0" stop-color="#0a1428"/><stop offset="0.36" stop-color="#0c2a50"/><stop offset="0.5" stop-color="#1590e0"/><stop offset="0.72" stop-color="#0a58b8"/><stop offset="0.86" stop-color="#0a1060"/><stop offset="1" stop-color="#04040a"/></radialGradient></defs>
<circle cx="10" cy="10" r="9.6" fill="url(#vg404736)"/><path d="M3.2 8.500A7 7 0 0 1 8 3.300" stroke="#20d8e0" stroke-width="2.200" fill="none" opacity="0.900"/><path d="M5 15.500A7.200 7.200 0 0 0 15.500 14.800" stroke="#18b0ec" stroke-width="2" fill="none" opacity="0.900"/><path d="M16.600 7.500A7 7 0 0 1 16.800 12" stroke="#20a8f0" stroke-width="1.800" fill="none" opacity="0.800"/><ellipse cx="7.600" cy="8" rx="2.600" ry="1.700" fill="#fff" transform="rotate(35 7.600 8)"/><circle cx="11.200" cy="11.300" r="1.700" fill="#f09820"/><circle cx="9.800" cy="10.200" r="1" fill="#8a8a80" opacity="0.800"/></svg>
<div style="left:445px;top:766px;width:40px;height:2px;background:#76b9ed;"></div>
<svg style="left:453px;top:736px;" width="24" height="24" viewBox="0 0 24 24"><rect x="10" y="3" width="13" height="18" fill="#fff" stroke="#2a5699" stroke-width="0.800"/><path d="M12 6H21M12 8.500H21M12 11H21M12 13.500H21M12 16H21M12 18.500H21" stroke="#2a5699" stroke-width="1.100"/><path d="M1 3L14 0.500V23.500L1 21Z" fill="#2a5699"/><text x="7.500" y="16" font-size="10" font-weight="bold" fill="#fff" text-anchor="middle" font-family="Liberation Sans,sans-serif">W</text></svg>
<div style="left:494px;top:766px;width:40px;height:2px;background:#76b9ed;"></div>
<svg style="left:500px;top:734px;" width="28" height="26" viewBox="0 0 28 26"><path d="M3 16C1 9 8 4 15 5C21 6 23 11 20 14C18 16 15 15 14 17C13 19 15 20 13 22C9 24 4 21 3 16Z" fill="#dde8f4" stroke="#8aa0c0" stroke-width="0.800"/><circle cx="7" cy="13" r="1.700" fill="#e03c30"/><circle cx="11" cy="9.500" r="1.700" fill="#f0c020"/><circle cx="16" cy="9.500" r="1.700" fill="#40b040"/><circle cx="7.500" cy="18" r="1.700" fill="#3070e0"/><path d="M24 2L13.500 23" stroke="#d88828" stroke-width="2.200"/><path d="M23 1.500L25.500 0L25 5L23 6Z" fill="#f4d8b0"/></svg>
<svg style="left:1078px;top:739px;" width="18" height="18" viewBox="0 0 18 18"><circle cx="11.500" cy="4.500" r="3" fill="none" stroke="#fff" stroke-width="1.300"/><circle cx="5.500" cy="9" r="2.600" fill="none" stroke="#fff" stroke-width="1.300"/><path d="M1 17C1 13 3 11.800 5.500 11.800C8 11.800 10 13 10 17M8 10.500C9 8.500 10 8 11.500 8C14.500 8 16.500 9.500 16.500 13" fill="none" stroke="#fff" stroke-width="1.300"/></svg>
<svg style="left:1116px;top:744px;" width="14" height="8" viewBox="0 0 14 8"><path d="M1 7L7 1L13 7" fill="none" stroke="#fff" stroke-width="1.400"/></svg>
<svg style="left:1138px;top:739px;" width="18" height="18" viewBox="0 0 18 18"><path d="M1 6.500H4L8 2.500V15.500L4 11.500H1Z" fill="none" stroke="#fff" stroke-width="1.200"/><path d="M10.500 6.500C11.500 8 11.500 10 10.500 11.500" fill="none" stroke="#fff" stroke-width="1.100"/><path d="M12.800 4.500C14.500 7 14.500 11 12.800 13.500" fill="none" stroke="#d0d0d0" stroke-width="1"/><path d="M15 2.800C17.500 6 17.500 12 15 15.200" fill="none" stroke="#9a9a9a" stroke-width="1"/></svg>
<svg style="left:1162px;top:740px;" width="18" height="18" viewBox="0 0 18 18"><path d="M3 14A11 11 0 0 1 14 3" fill="none" stroke="#9a9a9a" stroke-width="1.300"/><path d="M6.500 14A7.500 7.500 0 0 1 14 6.500" fill="none" stroke="#9a9a9a" stroke-width="1.300"/><path d="M10 14A4 4 0 0 1 14 10" fill="none" stroke="#9a9a9a" stroke-width="1.300"/><circle cx="13.500" cy="14" r="1.200" fill="#9a9a9a"/><circle cx="4.500" cy="12.500" r="3.800" fill="#e02030"/><path d="M3 11L6 14M6 11L3 14" stroke="#fff" stroke-width="1.100"/></svg>
<svg style="left:1185px;top:740px;" width="22" height="16" viewBox="0 0 22 16"><rect x="6.500" y="4.500" width="12" height="8" fill="none" stroke="#fff" stroke-width="1.100"/><rect x="18.500" y="7" width="1.500" height="3" fill="#fff"/><path d="M10 6.500L14.500 10.500M14.500 6.500L10 10.500" stroke="#fff" stroke-width="1.100"/><path d="M2 1V4M5 1V4M1 4H6V6.500C6 8 5 8.500 3.500 8.500C2 8.500 1 8 1 6.500ZM3.500 8.500V12" fill="none" stroke="#fff" stroke-width="1.100"/></svg>
<span class="t" style="left:1213px;top:742px;font-size:12px;letter-spacing:-1.30px;color:#fff;">ENG</span>
<span class="t" style="left:1238px;top:733px;width:80px;text-align:center;font-size:12px;letter-spacing:-0.400px;color:#fff;">19:40</span>
<span class="t" style="left:1238px;top:751px;width:80px;text-align:center;font-size:12px;letter-spacing:-0.200px;color:#fff;">13/06/2019</span>
<svg style="left:1325px;top:739px;" width="26" height="26" viewBox="0 0 26 26"><path d="M1 1H17V12H7V16L3.500 12H1Z" fill="#fff"/><path d="M4 4H14M4 6.500H14M4 9H14" stroke="#0d0d0d" stroke-width="0.900"/> <circle cx="15.500" cy="17" r="7.400" fill="#333" stroke="#8a8a8a" stroke-width="0.900"/><text x="15.500" y="21" font-size="11" font-weight="bold" fill="#fff" text-anchor="middle" font-family="Liberation Sans,sans-serif">2</text></svg>
<div style="left:404px;top:47px;width:558px;height:573px;box-shadow:0 3px 16px 3px rgba(0,0,0,0.250);"></div>
<div style="left:404px;top:47px;width:558px;height:573px;background:#f0f0f0;border:1px solid #1883d7;"></div>
<div style="left:405px;top:48px;width:556px;height:30px;background:#fff;"></div>
<svg style="left:413px;top:54px;" width="16" height="16" viewBox="0 0 20 20"><defs><radialGradient id="vg413054" cx="0.5" cy="0.5" r="0.5"><stop offset="0" stop-color="#0a1428"/><stop offset="0.36" stop-color="#0c2a50"/><stop offset="0.5" stop-color="#1590e0"/><stop offset="0.72" stop-color="#0a58b8"/><stop offset="0.86" stop-color="#0a1060"/><stop offset="1" stop-color="#04040a"/></radialGradient></defs>
<circle cx="10" cy="10" r="9.6" fill="url(#vg413054)"/><path d="M3.2 8.500A7 7 0 0 1 8 3.300" stroke="#20d8e0" stroke-width="2.200" fill="none" opacity="0.900"/><path d="M5 15.500A7.200 7.200 0 0 0 15.500 14.800" stroke="#18b0ec" stroke-width="2" fill="none" opacity="0.900"/><path d="M16.600 7.500A7 7 0 0 1 16.800 12" stroke="#20a8f0" stroke-width="1.800" fill="none" opacity="0.800"/><ellipse cx="7.600" cy="8" rx="2.600" ry="1.700" fill="#fff" transform="rotate(35 7.600 8)"/><circle cx="11.200" cy="11.300" r="1.700" fill="#f09820"/><circle cx="9.800" cy="10.200" r="1" fill="#8a8a80" opacity="0.800"/></svg>
<span class="t" style="left:434.5px;top:57px;font-size:12px;letter-spacing:0.06px;">Import Media</span>
<svg style="left:941px;top:57px;" width="11" height="11" viewBox="0 0 11 11"><path d="M0.500 0.500L10.500 10.500M10.500 0.500L0.500 10.500" stroke="#000" stroke-width="1.100"/></svg>
<span class="t" style="left:459px;top:91px;font-size:11px;">Look in:</span>
<div style="left:504px;top:85px;width:261px;height:22px;background:#fff;border:1px solid #7a7a7a;"></div>
<svg style="left:511px;top:88px;" width="14" height="16" viewBox="0 0 14 16"><path d="M0.500 0.500H11.500V11.500H13.500V15.500H0.500Z" fill="#ffe08a" stroke="#f0c858" stroke-width="0.700"/></svg>
<span class="t" style="left:530px;top:91px;font-size:11px;">deling</span>
<svg style="left:751px;top:93px;" width="10" height="6" viewBox="0 0 10 6"><path d="M0.800 0.800L5 5L9.200 0.800" fill="none" stroke="#444" stroke-width="1.100"/></svg>
<svg style="left:780px;top:88px;" width="17" height="17" viewBox="0 0 17 17"><defs><radialGradient id="bk" cx="0.500" cy="0.250" r="0.800"><stop offset="0" stop-color="#a8a8a8"/><stop offset="0.450" stop-color="#5a5a5a"/><stop offset="1" stop-color="#2c2c2c"/></radialGradient></defs><circle cx="8.200" cy="8.200" r="7.700" fill="url(#bk)" stroke="#3a3a3a" stroke-width="0.600"/><path d="M3.300 8.300L7.800 4.300V7H12.500V9.600H7.800V12.300Z" fill="#fff"/></svg>
<svg style="left:803px;top:87px;" width="16" height="18" viewBox="0 0 16 18"><path d="M1.500 6.500H5.500L6.500 8H12.500V16.500H1.500Z" fill="#f0c850" stroke="#c89c28" stroke-width="0.800"/><path d="M1.500 16.500L3.500 9.500H14.500L12.500 16.500Z" fill="#fbe08a" stroke="#d0a838" stroke-width="0.800"/><path d="M7 14.500C10 12 10.500 9 9.500 6.500L7 7.500L10 1L14.500 5L12 5.800C13 9 11.500 13 7 14.500Z" fill="#34b040" stroke="#0a6a18" stroke-width="0.700"/></svg>
<svg style="left:826px;top:88px;" width="17" height="16" viewBox="0 0 17 16"><path d="M1.500 3.500H5.500L6.500 5H12.500V14.500H1.500Z" fill="#f0c850" stroke="#c89c28" stroke-width="0.800"/><path d="M1.500 14.500L3.500 7H15L12.500 14.500Z" fill="#fbe08a" stroke="#d0a838" stroke-width="0.800"/><circle cx="13" cy="4" r="2.200" fill="#ffe060"/><path d="M13 0L13.800 2.300L16 1.200L14.900 3.300L17 4L14.900 4.800L16 6.900L13.800 5.800L13 8L12.200 5.800L10 6.900L11.100 4.800L9 4L11.100 3.300L10 1.200L12.200 2.300Z" fill="none" stroke="#f04818" stroke-width="0.900"/></svg>
<svg style="left:850px;top:89px;" width="26" height="15" viewBox="0 0 26 15"><rect x="0.700" y="0.700" width="14" height="12.800" fill="#fff" stroke="#1a6ae0" stroke-width="1.400"/><rect x="0" y="0" width="15.400" height="3.200" fill="#1a6ae0"/><rect x="3" y="4.600" width="2" height="2.200" fill="#8a80c8"/><rect x="7" y="4.600" width="2" height="2.200" fill="#2070d0"/><rect x="11" y="4.600" width="2" height="2.200" fill="#18903a"/><rect x="3" y="9" width="2" height="2.200" fill="#f06030"/><rect x="7" y="9" width="2" height="2.200" fill="#102078"/><rect x="11" y="9" width="2" height="2.200" fill="#d89818"/><path d="M17.200 5H24.200L20.700 9Z" fill="#111"/></svg>
<div style="left:411px;top:114px;width:87px;height:338px;background:#f6f6f6;"></div>
<svg style="left:438px;top:120px;" width="36" height="32" viewBox="0 0 36 32"><g transform="rotate(-14 19 17)"><path d="M19 4.500L22.300 13.200L31.500 13.600L24.300 19.400L26.800 28.300L19 23.200L11.200 28.300L13.700 19.400L6.500 13.600L15.700 13.200Z" fill="#1e98f0"/><path d="M19 4.500L22.300 13.200L31.500 13.600L19 17Z" fill="#38aaf8"/></g><path d="M6 7.500L18 9M3 13L13 14M2 19.500L11 19" stroke="#7cc4f8" stroke-width="1.100" opacity="0.800"/></svg>
<span class="t" style="left:421.0px;top:155px;font-size:12px;letter-spacing:-0.41px;">Quick access</span>
<svg style="left:440px;top:185px;" width="29" height="21" viewBox="0 0 29 21"><defs><linearGradient id="dk" x1="0" y1="0" x2="1" y2="1"><stop offset="0" stop-color="#0f8cf0"/><stop offset="0.450" stop-color="#1a9cf8"/><stop offset="0.500" stop-color="#0f8ef2"/><stop offset="1" stop-color="#0c84e8"/></linearGradient></defs><rect x="0" y="0" width="28.500" height="20.500" fill="url(#dk)"/><path d="M2 19.200H4M22 19.200H23M24 19.200H25M26 19.200H27" stroke="#e8f4ff" stroke-width="1"/></svg>
<span class="t" style="left:433.0px;top:215px;font-size:12px;letter-spacing:-0.24px;">Desktop</span>
<svg style="left:440px;top:243px;" width="29" height="25" viewBox="0 0 29 25"><path d="M0 1H8.500L10.500 3H28V24H0Z" fill="#ffd667"/><path d="M0 4.500H28V24H0Z" fill="#ffe591"/><path d="M1.500 1.800H8" stroke="#fff" stroke-width="1.200"/><path d="M1.500 3.200H5" stroke="#3aa0e8" stroke-width="1.200"/><path d="M5.300 24.500V16L8 13H20.500L23.200 16V24.500H18.500V18H10V24.500Z" fill="#31a0e8"/><path d="M8 13H20.500L23.200 16H5.300Z" fill="#4fb4f4"/></svg>
<span class="t" style="left:433.0px;top:275px;font-size:12px;letter-spacing:-0.33px;">Libraries</span>
<svg style="left:437px;top:301px;" width="34" height="30" viewBox="0 0 34 30"><defs><linearGradient id="pcg" x1="0" y1="0" x2="1" y2="1"><stop offset="0" stop-color="#3eb4fa"/><stop offset="0.500" stop-color="#5ac4fc"/><stop offset="0.520" stop-color="#2aa4f4"/><stop offset="1" stop-color="#38acf6"/></linearGradient></defs><path d="M11 1.500L32.500 6.500V21.500L11 16.500Z" fill="#1e6a9c"/><path d="M12 3L31.500 7.500V20L12 15.500Z" fill="url(#pcg)"/><path d="M20 18.500L25 19.700V22L19 23.500Z" fill="#b8c0c8"/><path d="M16 23.500L27 21.500L29 23L18 25Z" fill="#d0d6dc"/><path d="M1 24.500L14 20L26 23.500L12 28.800Z" fill="#dde1e5" stroke="#b4bac0" stroke-width="0.500"/><path d="M4 24.500L15 21M7 25.600L18 22M10 26.700L21 23M13 27.700L24 23.700" stroke="#b4bac0" stroke-width="0.600"/></svg>
<span class="t" style="left:435.5px;top:335px;font-size:12px;letter-spacing:-0.71px;">This PC</span>
<svg style="left:438px;top:360px;" width="34" height="32" viewBox="0 0 34 32"><defs><radialGradient id="glb" cx="0.400" cy="0.350" r="0.700"><stop offset="0" stop-color="#6aaac8"/><stop offset="1" stop-color="#2a6a8c"/></radialGradient></defs><circle cx="20" cy="12.500" r="10.500" fill="url(#glb)"/><path d="M13 5C16 2 21 3 22 6C20 9 17 8 15 11C13 10 12 7 13 5ZM23 10C27 9 29 12 28 16C26 19 23 18 22 15C21 13 22 11 23 10Z" fill="#b4d8ec" opacity="0.850"/><path d="M2 9.500L21.500 13.500V26.500L2 22.500Z" fill="#1e6a9c"/><path d="M3 11L20.500 14.500V25L3 21.500Z" fill="#3cb0f8"/><path d="M3 11L20.500 14.500L3 20Z" fill="#5cc2fc" opacity="0.700"/><path d="M9 24L14 25V27.500L8 28.500Z" fill="#b8c0c8"/><path d="M5 28.500L16 27L18 28.500L7 30Z" fill="#d0d6dc"/></svg>
<span class="t" style="left:432.5px;top:395px;font-size:12px;letter-spacing:-0.03px;">Network</span>
<div style="left:504px;top:114px;width:434px;height:283px;background:#fff;"></div>
<div style="left:938px;top:114px;width:16px;height:283px;background:#f0f0f0;"></div>
<svg style="left:941px;top:120px;" width="9" height="6" viewBox="0 0 9 6"><path d="M0.800 5.200L4.500 1.500L8.200 5.200" stroke="#5a5a5a" stroke-width="1.800" fill="none"/></svg>
<svg style="left:941px;top:385px;" width="9" height="6" viewBox="0 0 9 6"><path d="M0.800 0.800L4.500 4.500L8.200 0.800" stroke="#5a5a5a" stroke-width="1.800" fill="none"/></svg>
<div style="left:938px;top:294px;width:15px;height:21px;background:#cdcdcd;"></div>
<div style="left:718px;top:262px;width:104px;height:118px;background:#cce8ff;"></div>
<svg style="left:513px;top:152px;" width="93" height="56" viewBox="0 0 93 56"><rect x="0" y="0" width="93" height="56" fill="#8e8e8e"/><rect x="1.800" y="2.8" width="6.500" height="5.500" rx="0.800" fill="#fff"/><rect x="84.700" y="2.8" width="6.500" height="5.500" rx="0.800" fill="#fff"/><rect x="1.800" y="11.8" width="6.500" height="5.500" rx="0.800" fill="#fff"/><rect x="84.700" y="11.8" width="6.500" height="5.500" rx="0.800" fill="#fff"/><rect x="1.800" y="20.8" width="6.500" height="5.500" rx="0.800" fill="#fff"/><rect x="84.700" y="20.8" width="6.500" height="5.500" rx="0.800" fill="#fff"/><rect x="1.800" y="29.8" width="6.500" height="5.500" rx="0.800" fill="#fff"/><rect x="84.700" y="29.8" width="6.500" height="5.500" rx="0.800" fill="#fff"/><rect x="1.800" y="38.8" width="6.500" height="5.500" rx="0.800" fill="#fff"/><rect x="84.700" y="38.8" width="6.500" height="5.500" rx="0.800" fill="#fff"/><rect x="1.800" y="47.8" width="6.500" height="5.500" rx="0.800" fill="#fff"/><rect x="84.700" y="47.8" width="6.500" height="5.500" rx="0.800" fill="#fff"/><rect x="10" y="0" width="73" height="56" fill="#1a1a1a"/><svg x="11" y="3" width="71" height="49.500" viewBox="0 0 72 53" preserveAspectRatio="none" style="position:static"><defs><filter id="bl513152" x="-5%" y="-5%" width="110%" height="110%"><feGaussianBlur stdDeviation="0.900"/></filter></defs><rect width="72" height="53" fill="#888"/><g filter="url(#bl513152)"><defs><linearGradient id="i1w" x1="0" y1="0" x2="0" y2="1"><stop offset="0" stop-color="#f6f6f4"/><stop offset="1" stop-color="#dcdad4"/></linearGradient></defs><rect width="72" height="53" fill="url(#i1w)"/><rect x="0" y="38" width="72" height="15" fill="#cfccc4"/><rect x="0" y="4" width="8" height="49" fill="#1c1a1a"/><rect x="2" y="8" width="5" height="30" fill="#3a2418"/><rect x="0" y="24" width="4" height="8" fill="#c04830"/><path d="M24 6L27 16L30 5L29 16L34 8L29 18L28 34H27L27 18L21 9Z" fill="#c8aa60"/><rect x="35" y="9" width="30" height="28" fill="#c8c4bc"/><rect x="36" y="10" width="10" height="8" fill="#6aa8c8"/><path d="M35 20C38 16 44 16 46 19V38H35Z" fill="#6a3418"/><path d="M46 19C49 16 52 17 54 20V38H46Z" fill="#5a2c14"/><rect x="46" y="10" width="16" height="8" fill="#2a1a14"/><rect x="51" y="13" width="6" height="28" rx="2" fill="#101010"/><rect x="50" y="36" width="3" height="10" fill="#141414"/><rect x="55" y="36" width="3" height="10" fill="#141414"/><rect x="60" y="12" width="5" height="6" rx="2" fill="#e0b818"/><rect x="59" y="17" width="8" height="16" fill="#176a40"/><rect x="60" y="32" width="6" height="12" fill="#d8a030"/><rect x="66" y="3" width="5" height="8" fill="#5a8ab0"/><rect x="66" y="3" width="5" height="2" fill="#d8c040"/><circle cx="15" cy="42" r="7" fill="none" stroke="#1a1a1a" stroke-width="1.600"/><circle cx="15" cy="42" r="5" fill="none" stroke="#8a8a8a" stroke-width="0.600"/><path d="M8 30L15 42M6 32H14M10 26L18 30" stroke="#1a1a1a" stroke-width="1.400"/><rect x="11" y="27" width="6" height="3" fill="#3060c0"/><path d="M0 34L10 44L6 53H0Z" fill="#1a1414"/></g></svg></svg>
<span class="t" style="left:532.0px;top:217px;font-size:12px;letter-spacing:-0.48px;">MAH06783</span>
<svg style="left:634px;top:122px;" width="64" height="85" viewBox="0 0 64 85"><defs><linearGradient id="pg634122" x1="0" y1="0" x2="1" y2="1"><stop offset="0" stop-color="#fbfbfb"/><stop offset="1" stop-color="#f0f0f0"/></linearGradient><linearGradient id="pf634122" x1="0" y1="0" x2="1" y2="1"><stop offset="0" stop-color="#f4f4f4"/><stop offset="1" stop-color="#d8d8d8"/></linearGradient></defs><path d="M0.500 0.500H44.500L62.500 18.500V83.500H0.500Z" fill="url(#pg634122)" stroke="#d0d0d0"/><path d="M44.500 0.500V18.500H62.500Z" fill="url(#pf634122)" stroke="#d0d0d0"/></svg>
<span class="t" style="left:616.5px;top:217px;font-size:12px;letter-spacing:-0.38px;">MAH06783.MP4....</span>
<svg style="left:723px;top:152px;" width="93" height="56" viewBox="0 0 93 56"><rect x="0" y="0" width="93" height="56" fill="#8e8e8e"/><rect x="1.800" y="2.8" width="6.500" height="5.500" rx="0.800" fill="#fff"/><rect x="84.700" y="2.8" width="6.500" height="5.500" rx="0.800" fill="#fff"/><rect x="1.800" y="11.8" width="6.500" height="5.500" rx="0.800" fill="#fff"/><rect x="84.700" y="11.8" width="6.500" height="5.500" rx="0.800" fill="#fff"/><rect x="1.800" y="20.8" width="6.500" height="5.500" rx="0.800" fill="#fff"/><rect x="84.700" y="20.8" width="6.500" height="5.500" rx="0.800" fill="#fff"/><rect x="1.800" y="29.8" width="6.500" height="5.500" rx="0.800" fill="#fff"/><rect x="84.700" y="29.8" width="6.500" height="5.500" rx="0.800" fill="#fff"/><rect x="1.800" y="38.8" width="6.500" height="5.500" rx="0.800" fill="#fff"/><rect x="84.700" y="38.8" width="6.500" height="5.500" rx="0.800" fill="#fff"/><rect x="1.800" y="47.8" width="6.500" height="5.500" rx="0.800" fill="#fff"/><rect x="84.700" y="47.8" width="6.500" height="5.500" rx="0.800" fill="#fff"/><rect x="10" y="0" width="73" height="56" fill="#1a1a1a"/><svg x="11" y="3" width="71" height="49.500" viewBox="0 0 72 53" preserveAspectRatio="none" style="position:static"><defs><filter id="bl723152" x="-5%" y="-5%" width="110%" height="110%"><feGaussianBlur stdDeviation="0.900"/></filter></defs><rect width="72" height="53" fill="#888"/><g filter="url(#bl723152)"><rect width="72" height="53" fill="#4a2a1a"/><rect width="72" height="5" fill="#241812"/><g fill="#eef0ee"><path d="M0 5H5L6 9L0 6Z"/><path d="M9 5H15L18 12L13 10Z"/><path d="M19 4.500H26L28 12H22Z"/><path d="M29 4.500H35V12H31Z"/><path d="M39 4.500H46L45 12H39Z"/><path d="M50 4.500H57L54 12H48Z"/><path d="M61 4.500H68L62 12H58Z"/></g><rect x="0" y="12" width="72" height="3" fill="#3a1e14"/><path d="M0 15H72V30H0Z" fill="#6a3c24"/><g fill="#9a6a44"><path d="M0 17L20 15L32 28H26Z"/><path d="M72 17L52 15L40 28H46Z"/><path d="M0 24L14 20L26 30H16Z" opacity="0.700"/><path d="M72 24L58 20L46 30H56Z" opacity="0.700"/></g><path d="M28 15H44L41 28H31Z" fill="#2c1a14"/><rect x="30" y="16" width="12" height="1.500" fill="#e8e8e8"/><rect x="31" y="22" width="10" height="1" fill="#c8c8c8" opacity="0.600"/><rect x="0" y="28" width="72" height="5" fill="#2e1a12"/><rect x="0" y="33" width="72" height="20" fill="#c89060"/><path d="M10 36H34V40H10ZM40 36H62V40H40Z" fill="#d87840"/><rect x="32" y="34" width="12" height="6" fill="#6a8a48"/><rect x="10" y="41" width="52" height="5" fill="#e8dcc8"/><rect x="10" y="46" width="52" height="5" fill="#7a4a30"/><rect x="34" y="46" width="6" height="5" fill="#e8e0e0"/><rect x="0" y="30" width="2" height="23" fill="#3a3432"/><rect x="2" y="33" width="3" height="20" fill="#e0a890"/><rect x="6" y="29" width="5" height="24" fill="#3c3634"/><rect x="25" y="33" width="2.500" height="20" fill="#443c3a"/><rect x="16" y="36" width="1.500" height="17" fill="#5a504c"/><rect x="50" y="33" width="2.500" height="20" fill="#443c3a"/><rect x="60" y="29" width="5" height="24" fill="#3c3634"/><rect x="66" y="33" width="5" height="8" fill="#d88848"/><rect x="66" y="41" width="5" height="12" fill="#b8a890"/><rect x="0" y="51" width="72" height="2" fill="#2a1a14"/></g></svg></svg>
<span class="t" style="left:742.0px;top:217px;font-size:12px;letter-spacing:-0.48px;">MAH06784</span>
<svg style="left:844px;top:122px;" width="64" height="85" viewBox="0 0 64 85"><defs><linearGradient id="pg844122" x1="0" y1="0" x2="1" y2="1"><stop offset="0" stop-color="#fbfbfb"/><stop offset="1" stop-color="#f0f0f0"/></linearGradient><linearGradient id="pf844122" x1="0" y1="0" x2="1" y2="1"><stop offset="0" stop-color="#f4f4f4"/><stop offset="1" stop-color="#d8d8d8"/></linearGradient></defs><path d="M0.500 0.500H44.500L62.500 18.500V83.500H0.500Z" fill="url(#pg844122)" stroke="#d0d0d0"/><path d="M44.500 0.500V18.500H62.500Z" fill="url(#pf844122)" stroke="#d0d0d0"/></svg>
<span class="t" style="left:826.5px;top:217px;font-size:12px;letter-spacing:-0.38px;">MAH06784.MP4....</span>
<svg style="left:513px;top:300px;" width="93" height="56" viewBox="0 0 93 56"><rect x="0" y="0" width="93" height="56" fill="#8e8e8e"/><rect x="1.800" y="2.8" width="6.500" height="5.500" rx="0.800" fill="#fff"/><rect x="84.700" y="2.8" width="6.500" height="5.500" rx="0.800" fill="#fff"/><rect x="1.800" y="11.8" width="6.500" height="5.500" rx="0.800" fill="#fff"/><rect x="84.700" y="11.8" width="6.500" height="5.500" rx="0.800" fill="#fff"/><rect x="1.800" y="20.8" width="6.500" height="5.500" rx="0.800" fill="#fff"/><rect x="84.700" y="20.8" width="6.500" height="5.500" rx="0.800" fill="#fff"/><rect x="1.800" y="29.8" width="6.500" height="5.500" rx="0.800" fill="#fff"/><rect x="84.700" y="29.8" width="6.500" height="5.500" rx="0.800" fill="#fff"/><rect x="1.800" y="38.8" width="6.500" height="5.500" rx="0.800" fill="#fff"/><rect x="84.700" y="38.8" width="6.500" height="5.500" rx="0.800" fill="#fff"/><rect x="1.800" y="47.8" width="6.500" height="5.500" rx="0.800" fill="#fff"/><rect x="84.700" y="47.8" width="6.500" height="5.500" rx="0.800" fill="#fff"/><rect x="10" y="0" width="73" height="56" fill="#1a1a1a"/><svg x="11" y="3" width="71" height="49.500" viewBox="0 0 72 53" preserveAspectRatio="none" style="position:static"><defs><filter id="bl513300" x="-5%" y="-5%" width="110%" height="110%"><feGaussianBlur stdDeviation="0.900"/></filter></defs><rect width="72" height="53" fill="#888"/><g filter="url(#bl513300)"><rect width="72" height="53" fill="#ece8dc"/><rect x="0" y="0" width="72" height="12" fill="#f0f0ea"/><path d="M12 8L16 1H32L38 8Z" fill="#e08c3c"/><path d="M44 8L52 1H66L72 6V8Z" fill="#e08c3c"/><path d="M34 0H56L50 6H38Z" fill="#5a8a48"/><rect x="8" y="6" width="4" height="4" fill="#5a8a48"/><rect x="8" y="9" width="64" height="2" fill="#f4f2ec"/><rect x="8" y="11" width="64" height="10" fill="#b4a490"/><g fill="#f4f0e8"><rect x="17" y="11" width="2" height="10"/><rect x="29" y="11" width="3" height="10"/><rect x="46" y="11" width="3" height="10"/><rect x="62" y="11" width="2" height="10"/></g><g fill="#d87038"><rect x="20" y="13" width="4" height="4"/><rect x="34" y="14" width="3" height="3"/><rect x="50" y="13" width="4" height="4"/></g><rect x="8" y="20" width="64" height="8" fill="#3a2018"/><g fill="#f0ece4"><rect x="13" y="21" width="1.500" height="6"/><rect x="16" y="21" width="1.500" height="6"/><rect x="19" y="21" width="1.500" height="6"/><rect x="29" y="21" width="1.500" height="6"/><rect x="32" y="21" width="1.500" height="6"/><rect x="35" y="21" width="1.500" height="6"/><rect x="38" y="21" width="1.500" height="6"/><rect x="46" y="21" width="1.500" height="6"/><rect x="49" y="21" width="1.500" height="6"/><rect x="52" y="21" width="1.500" height="6"/><rect x="62" y="21" width="1.500" height="6"/><rect x="65" y="21" width="1.500" height="6"/><rect x="68" y="21" width="1.500" height="6"/></g><path d="M22 28H60L66 53H18Z" fill="#eeeae0"/><rect x="38" y="28" width="6" height="10" fill="#dcd8d0"/><rect x="8" y="26" width="16" height="5" fill="#2a1a16"/><rect x="60" y="26" width="12" height="4" fill="#2a1a16"/><rect x="0" y="0" width="7" height="44" fill="#566064"/><rect x="12" y="0" width="2.500" height="20" fill="#6a7478"/><rect x="23" y="0" width="3.500" height="26" fill="#5a666a"/><rect x="22" y="25" width="5.500" height="13" fill="#2a1814"/><rect x="56" y="0" width="3.500" height="26" fill="#5a666a"/><rect x="55" y="25" width="5.500" height="13" fill="#2a1814"/><rect x="67" y="0" width="2" height="20" fill="#6a7478"/><rect x="40" y="9" width="4" height="3" fill="#2a2020"/><rect x="39" y="12" width="6" height="7" fill="#c84838"/><rect x="40" y="19" width="4" height="10" fill="#2a2a2c"/><path d="M8 30H18V53H8Z" fill="#1c1c1e"/><path d="M13 36L22 31L24 33V46L18 53H13Z" fill="#44484c"/><path d="M13 36L22 31L24 33L15 38Z" fill="#6a7074"/><path d="M60 32L62 30L72 36V53H66Z" fill="#5a5e62"/><path d="M60 32L62 30L72 36V38Z" fill="#7a8084"/><path d="M0 42H10V53H0Z" fill="#4a2414"/><rect x="8" y="36" width="4" height="6" fill="#4a7a3a"/><rect x="69" y="42" width="3" height="11" fill="#c8a078"/></g></svg></svg>
<span class="t" style="left:532.0px;top:365px;font-size:12px;letter-spacing:-0.48px;">MAH06785</span>
<svg style="left:634px;top:270px;" width="64" height="85" viewBox="0 0 64 85"><defs><linearGradient id="pg634270" x1="0" y1="0" x2="1" y2="1"><stop offset="0" stop-color="#fbfbfb"/><stop offset="1" stop-color="#f0f0f0"/></linearGradient><linearGradient id="pf634270" x1="0" y1="0" x2="1" y2="1"><stop offset="0" stop-color="#f4f4f4"/><stop offset="1" stop-color="#d8d8d8"/></linearGradient></defs><path d="M0.500 0.500H44.500L62.500 18.500V83.500H0.500Z" fill="url(#pg634270)" stroke="#d0d0d0"/><path d="M44.500 0.500V18.500H62.500Z" fill="url(#pf634270)" stroke="#d0d0d0"/></svg>
<span class="t" style="left:616.5px;top:365px;font-size:12px;letter-spacing:-0.38px;">MAH06785.MP4....</span>
<svg style="left:723px;top:300px;" width="93" height="56" viewBox="0 0 93 56"><rect x="0" y="0" width="93" height="56" fill="#8e8e8e"/><rect x="1.800" y="2.8" width="6.500" height="5.500" rx="0.800" fill="#cce8ff"/><rect x="84.700" y="2.8" width="6.500" height="5.500" rx="0.800" fill="#cce8ff"/><rect x="1.800" y="11.8" width="6.500" height="5.500" rx="0.800" fill="#cce8ff"/><rect x="84.700" y="11.8" width="6.500" height="5.500" rx="0.800" fill="#cce8ff"/><rect x="1.800" y="20.8" width="6.500" height="5.500" rx="0.800" fill="#cce8ff"/><rect x="84.700" y="20.8" width="6.500" height="5.500" rx="0.800" fill="#cce8ff"/><rect x="1.800" y="29.8" width="6.500" height="5.500" rx="0.800" fill="#cce8ff"/><rect x="84.700" y="29.8" width="6.500" height="5.500" rx="0.800" fill="#cce8ff"/><rect x="1.800" y="38.8" width="6.500" height="5.500" rx="0.800" fill="#cce8ff"/><rect x="84.700" y="38.8" width="6.500" height="5.500" rx="0.800" fill="#cce8ff"/><rect x="1.800" y="47.8" width="6.500" height="5.500" rx="0.800" fill="#cce8ff"/><rect x="84.700" y="47.8" width="6.500" height="5.500" rx="0.800" fill="#cce8ff"/><rect x="10" y="0" width="73" height="56" fill="#1a1a1a"/><svg x="11" y="3" width="71" height="49.500" viewBox="0 0 72 53" preserveAspectRatio="none" style="position:static"><defs><filter id="bl723300" x="-5%" y="-5%" width="110%" height="110%"><feGaussianBlur stdDeviation="0.900"/></filter></defs><rect width="72" height="53" fill="#888"/><g filter="url(#bl723300)"><defs><linearGradient id="sky" x1="0" y1="0" x2="1" y2="0"><stop offset="0" stop-color="#8a92a6"/><stop offset="0.550" stop-color="#8e98ae"/><stop offset="0.700" stop-color="#6e92c4"/><stop offset="1" stop-color="#7a9cc8"/></linearGradient><radialGradient id="sun" cx="0" cy="1" r="0.350"><stop offset="0" stop-color="#f4f4f4"/><stop offset="1" stop-color="#f4f4f4" stop-opacity="0"/></radialGradient></defs><rect width="72" height="53" fill="url(#sky)"/><path d="M44 0C48 6 42 14 44 20C40 26 44 32 38 36L0 40V0Z" fill="#8a93a8"/><path d="M44 0H72V30C64 28 58 34 52 30C46 28 42 22 44 20C42 14 48 6 44 0Z" fill="#6a90c4"/><ellipse cx="48" cy="36" rx="9" ry="4" fill="#d8dce6" opacity="0.900"/><ellipse cx="40" cy="42" rx="10" ry="5" fill="#c0c6d4" opacity="0.800"/><ellipse cx="52" cy="40" rx="4" ry="3" fill="#e0e2ea" opacity="0.800"/><ellipse cx="66" cy="36" rx="3" ry="3.500" fill="#b8c4dc" opacity="0.800"/><rect x="0" y="30" width="72" height="23" fill="#9aa4b8" opacity="0.350"/><rect width="72" height="53" fill="url(#sun)"/><path d="M0 50L72 46V53H0Z" fill="#8896ae"/><path d="M0 50L72 46" stroke="#1e2024" stroke-width="1.100"/><path d="M24 50L27 50L25.500 52Z" fill="#111"/><rect x="0" y="51.500" width="26" height="1" fill="#c8c8c8"/></g><path d="M0 50.300L72 46.300" stroke="#22252a" stroke-width="0.900"/><path d="M24 50L27 50L25.500 52Z" fill="#111"/></svg></svg>
<span class="t" style="left:742.0px;top:365px;font-size:12px;letter-spacing:-0.48px;">MAH06786</span>
<svg style="left:844px;top:270px;" width="64" height="85" viewBox="0 0 64 85"><defs><linearGradient id="pg844270" x1="0" y1="0" x2="1" y2="1"><stop offset="0" stop-color="#fbfbfb"/><stop offset="1" stop-color="#f0f0f0"/></linearGradient><linearGradient id="pf844270" x1="0" y1="0" x2="1" y2="1"><stop offset="0" stop-color="#f4f4f4"/><stop offset="1" stop-color="#d8d8d8"/></linearGradient></defs><path d="M0.500 0.500H44.500L62.500 18.500V83.500H0.500Z" fill="url(#pg844270)" stroke="#d0d0d0"/><path d="M44.500 0.500V18.500H62.500Z" fill="url(#pf844270)" stroke="#d0d0d0"/></svg>
<span class="t" style="left:826.5px;top:365px;font-size:12px;letter-spacing:-0.38px;">MAH06786.MP4....</span>
<span class="t" style="left:506.5px;top:413px;font-size:11px;letter-spacing:-0.47px;">File name:</span>
<div style="left:600px;top:406px;width:246px;height:22px;background:#fff;border:1px solid #7a7a7a;"></div>
<span class="t" style="left:604.5px;top:413px;font-size:11px;letter-spacing:-0.15px;">MAH06786</span>
<svg style="left:832px;top:414px;" width="10" height="6" viewBox="0 0 10 6"><path d="M0.800 0.800L5 5L9.200 0.800" fill="none" stroke="#444" stroke-width="1.100"/></svg>
<span class="t" style="left:506.5px;top:439px;font-size:11px;letter-spacing:-0.32px;">Files of type:</span>
<div style="left:600px;top:434px;width:246px;height:21px;background:#e1e1e1;border:1px solid #adadad;"></div>
<span class="t" style="left:604px;top:440px;font-size:11px;letter-spacing:-0.22px;">All Project and Media Files</span>
<svg style="left:832px;top:442px;" width="10" height="6" viewBox="0 0 10 6"><path d="M0.800 0.800L5 5L9.200 0.800" fill="none" stroke="#444" stroke-width="1.100"/></svg>
<span class="t" style="left:505.5px;top:468px;font-size:11px;letter-spacing:-0.07px;">Recent:</span>
<div style="left:600px;top:463px;width:246px;height:21px;background:#e1e1e1;border:1px solid #adadad;overflow:hidden;"><span class="t" style="left:3px;top:5px;font-size:11px;">D:\Lit's Journey\Alwaysimproveyourskill\#Video</span><div style="left:227px;top:0;width:18px;height:19px;background:#e1e1e1;"></div></div>
<svg style="left:832px;top:471px;" width="10" height="6" viewBox="0 0 10 6"><path d="M0.800 0.800L5 5L9.200 0.800" fill="none" stroke="#444" stroke-width="1.100"/></svg>
<div style="left:880px;top:407px;width:73px;height:21px;background:#e5f1fb;border:1px solid #0078d7;"><span class="t" style="left:0;top:4.500px;width:71px;text-align:center;font-size:11px;color:#000;">Open</span></div>
<div style="left:880px;top:433px;width:73px;height:21px;background:#e1e1e1;border:1px solid #adadad;"><span class="t" style="left:0;top:4.500px;width:71px;text-align:center;font-size:11px;color:#000;">Cancel</span></div>
<div style="left:880px;top:464px;width:73px;height:21px;background:#cccccc;border:1px solid #bfbfbf;"><span class="t" style="left:0;top:4.500px;width:71px;text-align:center;font-size:11px;color:#838383;">Custom...</span></div>
<div style="left:880px;top:493px;width:73px;height:21px;background:#cccccc;border:1px solid #bfbfbf;"><span class="t" style="left:0;top:4.500px;width:71px;text-align:center;font-size:11px;color:#838383;">About...</span></div>
<div style="left:504px;top:524px;width:450px;height:61px;border:1px solid #dcdcdc;"></div>
<span class="t" style="left:513px;top:533px;font-size:11px;">File type:</span>
<span class="t" style="left:562px;top:533px;font-size:11px;">Sony AVC</span>
<span class="t" style="left:728px;top:533px;font-size:11px;">Streams:</span>
<span class="t" style="left:777px;top:533px;font-size:11px;">2</span>
<span class="t" style="left:513px;top:549px;font-size:11px;">Audio:</span>
<span class="t" style="left:562px;top:549px;font-size:11px;">48.000 Hz; Stereo</span>
<span class="t" style="left:728px;top:549px;font-size:11px;">Length:</span>
<span class="t" style="left:777px;top:549px;font-size:11px;">00:00:06:00</span>
<span class="t" style="left:513px;top:565px;font-size:11px;">Video:</span>
<span class="t" style="left:562px;top:565px;font-size:11px;">1280x720x12; 29,970 fps</span>
<span class="t" style="left:728px;top:565px;font-size:11px;">Length:</span>
<span class="t" style="left:777px;top:565px;font-size:11px;">00:00:06:00</span>
<div style="left:506px;top:597px;width:13px;height:13px;background:#fff;border:1px solid #b4b4b4;"></div>
<span class="t" style="left:522px;top:598px;font-size:11px;letter-spacing:-0.28px;color:#6d6d6d;">Open still image sequence</span>
<span class="t" style="left:676.5px;top:598px;font-size:11px;letter-spacing:0.02px;color:#a0a0a0;">range:</span>
<span class="t" style="left:782px;top:598px;font-size:11px;color:#a0a0a0;">-</span>
<div style="left:795px;top:594px;width:69px;height:20px;background:#f1f1f1;border:1px solid #cacaca;box-shadow:inset 0 0 0 1px #e6e6e6;"></div>
<svg style="left:950px;top:609px;" width="8" height="8" viewBox="0 0 8 8"><rect x="6" y="0" width="2" height="2" fill="#b4b4b4"/><rect x="3" y="3" width="2" height="2" fill="#b4b4b4"/><rect x="6" y="3" width="2" height="2" fill="#b4b4b4"/><rect x="0" y="6" width="2" height="2" fill="#b4b4b4"/><rect x="3" y="6" width="2" height="2" fill="#b4b4b4"/><rect x="6" y="6" width="2" height="2" fill="#b4b4b4"/></svg>
</body></html>
